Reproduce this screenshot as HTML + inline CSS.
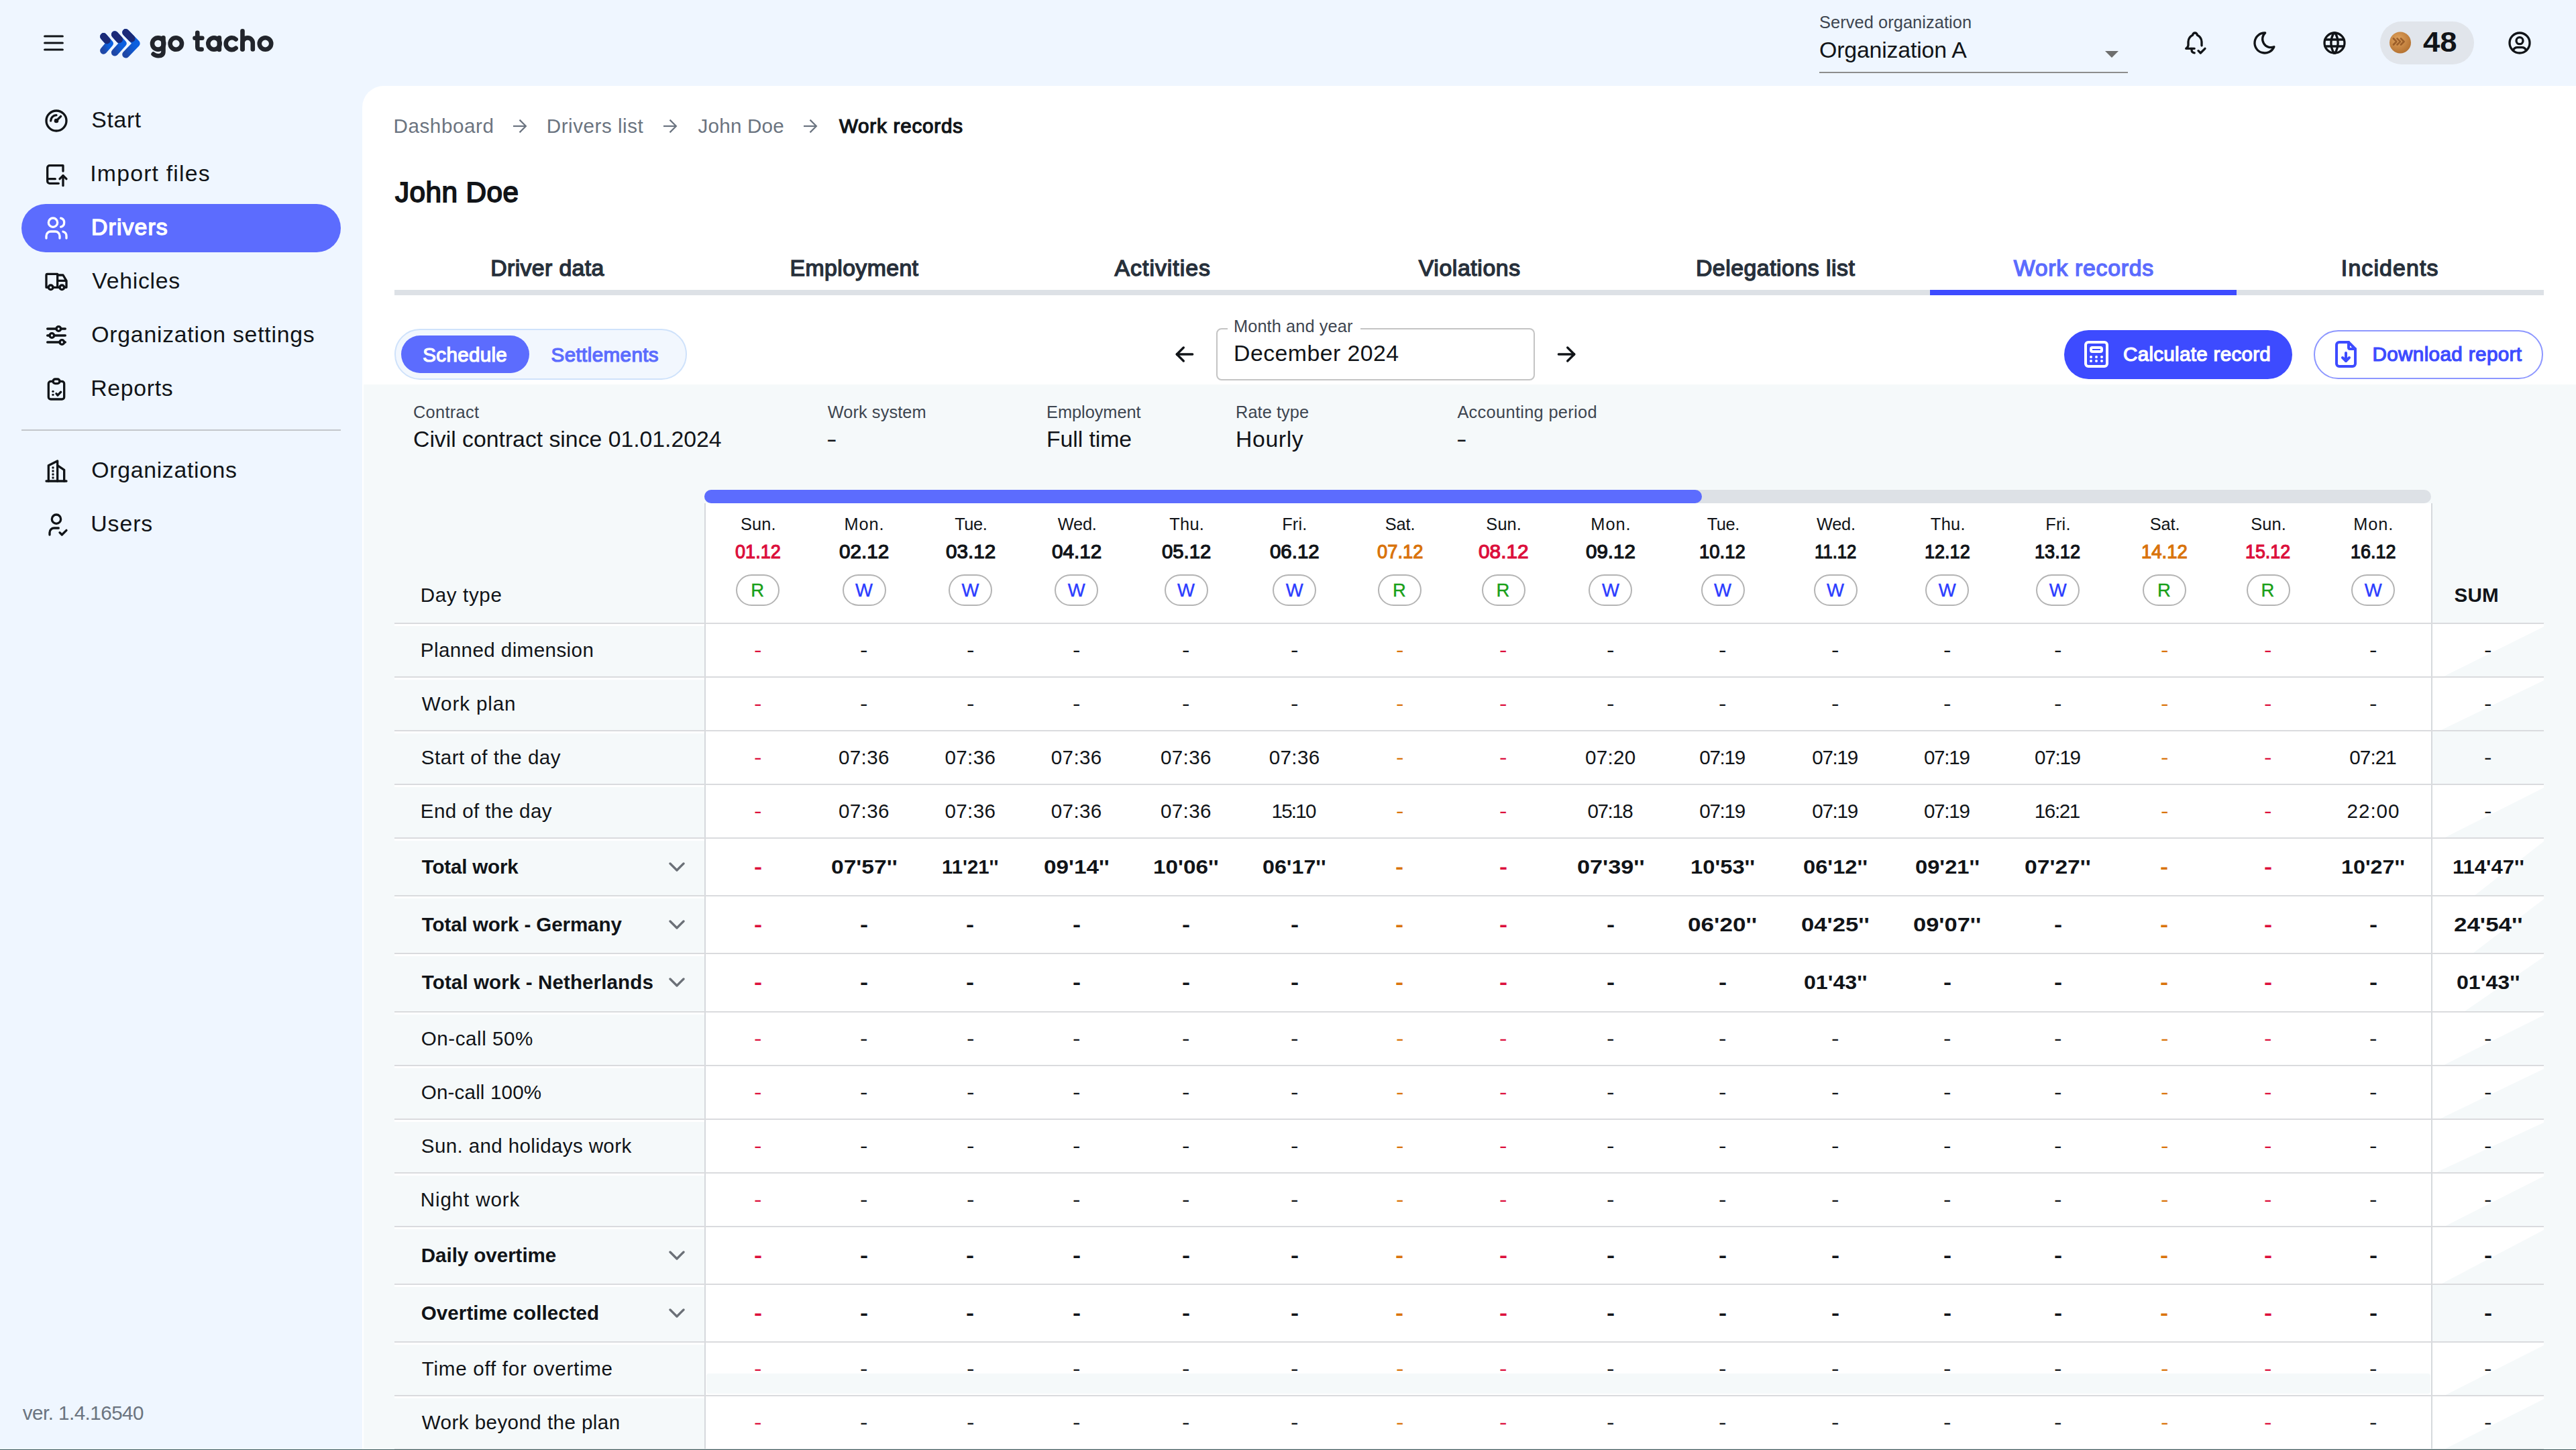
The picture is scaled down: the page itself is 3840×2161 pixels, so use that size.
<!DOCTYPE html><html><head><meta charset="utf-8"><title>Work records</title><style>
html,body{margin:0;padding:0;}
body{width:3840px;height:2161px;overflow:hidden;position:relative;background:#eff6ff;font-family:"Liberation Sans", sans-serif;}
.t{position:absolute;white-space:nowrap;}
.r{position:absolute;box-sizing:border-box;}
.ic{position:absolute;overflow:visible;}
</style></head><body>
<svg class="ic" style="left:60px;top:44px;width:40px;height:40px;" viewBox="0 0 24 24" fill="none" stroke="#111418" stroke-width="1.9" stroke-linecap="round" stroke-linejoin="round"><path d="M4 6l16 0"/><path d="M4 12l16 0"/><path d="M4 18l16 0"/></svg>
<svg class="ic" style="left:0;top:0;width:260px;height:120px" viewBox="0 0 260 120" fill="none" stroke-linecap="round" stroke-linejoin="round"><defs><linearGradient id="lg" x1="0" y1="1" x2="1" y2="0"><stop offset="0" stop-color="#1f47a6"/><stop offset="0.6" stop-color="#0b5fdd"/><stop offset="1" stop-color="#0a60e2"/></linearGradient></defs><g stroke-width="10.6"><path d="M154.4 54.4L163.5 64.8L154.4 75.4" stroke="url(#lg)"/><path d="M154.4 54.4L159.41 60.12" stroke="#1b2a77"/><path d="M171.2 51.5L183.3 64.8L171.2 78.3" stroke="url(#lg)"/><path d="M171.2 51.5L177.85 58.81" stroke="#1b2a77"/><path d="M187.5 48.4L203.4 64.8L187.5 81.2" stroke="url(#lg)"/><path d="M187.5 48.4L196.25 57.42" stroke="#1b2a77"/></g></svg>
<svg class="ic" style="left:0;top:0;width:420px;height:100px" viewBox="0 0 420 100" fill="none" stroke="#22252c" stroke-width="6.6" stroke-linecap="round" stroke-linejoin="round"><circle cx="235.6" cy="65" r="8.6"/><path d="M243.5 56.3V76.5Q243.5 83.2 236 83.2Q231.5 83.2 228.6 80.6"/><circle cx="262.3" cy="65" r="8.7"/><path d="M294.3 48.7V70Q294.3 73.5 297.8 73.5H300.6"/><path d="M290.5 56.8H301.3"/><circle cx="319" cy="65" r="8.7"/><path d="M326.9 56.4V73.9"/><path d="M351.6 58.6A8.9 8.9 0 1 0 351.6 71.8"/><path d="M361.5 46.3V73.5"/><path d="M361.5 73.5V64A7.65 7.65 0 0 1 376.8 64V73.5"/><circle cx="395.5" cy="65" r="8.75"/></svg>
<div class="t" style="left:2712.00px;top:20.52px;font-size:25.37px;line-height:25.37px;font-weight:400;color:#3d4550;letter-spacing:0.086px;">Served organization</div>
<div class="t" style="left:2712.00px;top:58.37px;font-size:33.82px;line-height:33.82px;font-weight:400;color:#111418;letter-spacing:-0.162px;">Organization A</div>
<svg class="ic" style="left:3136px;top:74px;width:24px;height:14px" viewBox="0 0 24 14"><path d="M2 2H22L12 12Z" fill="#6e6e6e"/></svg>
<div class="r" style="left:2712px;top:107px;width:460px;height:2px;background:#8d8d8d;border-radius:0px;"></div>
<svg class="ic" style="left:3252px;top:44px;width:40px;height:40px;" viewBox="0 0 24 24" fill="none" stroke="#111418" stroke-width="2" stroke-linecap="round" stroke-linejoin="round"><path d="M11.5 17h-7.5a4 4 0 0 0 2 -3v-3a7 7 0 0 1 4 -6a2 2 0 1 1 4 0a7 7 0 0 1 4 6v3c.016 .129 .037 .256 .065 .382"/><path d="M9 17v1a3 3 0 0 0 2.502 2.959"/><path d="M15 19l2 2l4 -4"/></svg>
<svg class="ic" style="left:3356px;top:44px;width:40px;height:40px;" viewBox="0 0 24 24" fill="none" stroke="#111418" stroke-width="2" stroke-linecap="round" stroke-linejoin="round"><path d="M12 3c.132 0 .263 0 .393 0a7.5 7.5 0 0 0 7.92 12.446a9 9 0 1 1 -8.313 -12.454z"/></svg>
<svg class="ic" style="left:3460px;top:44px;width:40px;height:40px;" viewBox="0 0 24 24" fill="none" stroke="#111418" stroke-width="2" stroke-linecap="round" stroke-linejoin="round"><path d="M3 12a9 9 0 1 0 18 0a9 9 0 0 0 -18 0"/><path d="M3.6 9h16.8"/><path d="M3.6 15h16.8"/><path d="M11.5 3a17 17 0 0 0 0 18"/><path d="M12.5 3a17 17 0 0 1 0 18"/></svg>
<div class="r" style="left:3548px;top:32px;width:140px;height:64px;background:#e1e5eb;border-radius:32px;"></div>
<svg class="ic" style="left:3560px;top:46px;width:36px;height:36px" viewBox="0 0 36 36"><defs><radialGradient id="cg" cx="40%" cy="35%" r="70%"><stop offset="0" stop-color="#e0a35e"/><stop offset="1" stop-color="#b3702f"/></radialGradient></defs><circle cx="18" cy="17.5" r="16" fill="url(#cg)"/><g fill="none" stroke="#8a4d1d" stroke-width="2.6" stroke-linecap="round" stroke-linejoin="round" opacity="0.75"><path d="M8 11.5l4.5 4.5l-4.5 4.5"/><path d="M13.5 11.5l4.5 4.5l-4.5 4.5"/><path d="M19 11.5l4.5 4.5l-4.5 4.5"/></g></svg>
<div class="t" style="left:3612.00px;top:41.81px;font-size:42.28px;line-height:42.28px;font-weight:700;color:#111418;transform:scaleX(1.0751);transform-origin:0 0;">48</div>
<svg class="ic" style="left:3736px;top:44px;width:40px;height:40px;" viewBox="0 0 24 24" fill="none" stroke="#111418" stroke-width="2" stroke-linecap="round" stroke-linejoin="round"><path d="M12 12m-9 0a9 9 0 1 0 18 0a9 9 0 1 0 -18 0"/><path d="M12 10m-3 0a3 3 0 1 0 6 0a3 3 0 1 0 -6 0"/><path d="M6.168 18.849a4 4 0 0 1 3.832 -2.849h4a4 4 0 0 1 3.834 2.855"/></svg>
<div class="r" style="left:32px;top:304px;width:476px;height:72px;background:#5c6cfe;border-radius:36px;"></div>
<svg class="ic" style="left:64px;top:160px;width:40px;height:40px;" viewBox="0 0 24 24" fill="none" stroke="#111418" stroke-width="2" stroke-linecap="round" stroke-linejoin="round"><path d="M12 12m-9 0a9 9 0 1 0 18 0a9 9 0 1 0 -18 0"/><path d="M12 12m-1 0a1 1 0 1 0 2 0a1 1 0 1 0 -2 0"/><path d="M13.41 10.59l2.59 -2.59"/><path d="M7 12a5 5 0 0 1 5 -5"/></svg>
<div class="t" style="left:136.30px;top:162.37px;font-size:33.82px;line-height:33.82px;font-weight:400;color:#111418;letter-spacing:0.622px;">Start</div>
<svg class="ic" style="left:64px;top:240px;width:40px;height:40px;" viewBox="0 0 24 24" fill="none" stroke="#111418" stroke-width="2" stroke-linecap="round" stroke-linejoin="round"><path d="M18 9v-5h-12a2 2 0 0 0 -2 2v12a2 2 0 0 0 2 2h8"/><path d="M4 16h7"/><path d="M18 22v-9"/><path d="M15 16l3 -3l3 3"/></svg>
<div class="t" style="left:134.30px;top:242.37px;font-size:33.82px;line-height:33.82px;font-weight:400;color:#111418;letter-spacing:1.178px;">Import files</div>
<svg class="ic" style="left:64px;top:320px;width:40px;height:40px;" viewBox="0 0 24 24" fill="none" stroke="#ffffff" stroke-width="2" stroke-linecap="round" stroke-linejoin="round"><path d="M9 7m-4 0a4 4 0 1 0 8 0a4 4 0 1 0 -8 0"/><path d="M3 21v-2a4 4 0 0 1 4 -4h4a4 4 0 0 1 4 4v2"/><path d="M16 3.13a4 4 0 0 1 0 7.75"/><path d="M21 21v-2a4 4 0 0 0 -3 -3.85"/></svg>
<div class="t" style="left:136.01px;top:322.37px;font-size:33.82px;line-height:33.82px;font-weight:400;color:#ffffff;letter-spacing:1.103px;-webkit-text-stroke:1.42px #ffffff;">Drivers</div>
<svg class="ic" style="left:64px;top:400px;width:40px;height:40px;" viewBox="0 0 24 24" fill="none" stroke="#111418" stroke-width="2" stroke-linecap="round" stroke-linejoin="round"><path d="M7 17m-2 0a2 2 0 1 0 4 0a2 2 0 1 0 -4 0"/><path d="M17 17m-2 0a2 2 0 1 0 4 0a2 2 0 1 0 -4 0"/><path d="M5 17h-2v-11a1 1 0 0 1 1 -1h9v12m-4 0h6m4 0h2v-6h-8m0 -5h5l3 5"/></svg>
<div class="t" style="left:137.30px;top:401.87px;font-size:33.82px;line-height:33.82px;font-weight:400;color:#111418;letter-spacing:0.710px;">Vehicles</div>
<svg class="ic" style="left:64px;top:480px;width:40px;height:40px;" viewBox="0 0 24 24" fill="none" stroke="#111418" stroke-width="2" stroke-linecap="round" stroke-linejoin="round"><path d="M14 6m-2 0a2 2 0 1 0 4 0a2 2 0 1 0 -4 0"/><path d="M4 6l8 0"/><path d="M16 6l4 0"/><path d="M8 12m-2 0a2 2 0 1 0 4 0a2 2 0 1 0 -4 0"/><path d="M4 12l2 0"/><path d="M10 12l10 0"/><path d="M17 18m-2 0a2 2 0 1 0 4 0a2 2 0 1 0 -4 0"/><path d="M4 18l11 0"/><path d="M19 18l1 0"/></svg>
<div class="t" style="left:136.30px;top:481.87px;font-size:33.82px;line-height:33.82px;font-weight:400;color:#111418;letter-spacing:0.734px;">Organization settings</div>
<svg class="ic" style="left:64px;top:560px;width:40px;height:40px;" viewBox="0 0 24 24" fill="none" stroke="#111418" stroke-width="2" stroke-linecap="round" stroke-linejoin="round"><path d="M9 5h-2a2 2 0 0 0 -2 2v12a2 2 0 0 0 2 2h10a2 2 0 0 0 2 -2v-12a2 2 0 0 0 -2 -2h-2"/><path d="M9 3m0 2a2 2 0 0 1 2 -2h2a2 2 0 0 1 2 2v0a2 2 0 0 1 -2 2h-2a2 2 0 0 1 -2 -2z"/><path d="M9 14v.01"/><path d="M9 17v.01"/><path d="M12 16l1.2 1.5l2.8 -3"/></svg>
<div class="t" style="left:135.30px;top:561.87px;font-size:33.82px;line-height:33.82px;font-weight:400;color:#111418;letter-spacing:0.652px;">Reports</div>
<svg class="ic" style="left:64px;top:682px;width:40px;height:40px;" viewBox="0 0 24 24" fill="none" stroke="#111418" stroke-width="2" stroke-linecap="round" stroke-linejoin="round"><path d="M3 21l18 0"/><path d="M5 21v-14l8 -4v18"/><path d="M19 21v-10l-6 -4"/><path d="M9 9l0 .01"/><path d="M9 12l0 .01"/><path d="M9 15l0 .01"/><path d="M9 18l0 .01"/></svg>
<div class="t" style="left:136.30px;top:683.87px;font-size:33.82px;line-height:33.82px;font-weight:400;color:#111418;letter-spacing:0.674px;">Organizations</div>
<svg class="ic" style="left:64px;top:762px;width:40px;height:40px;" viewBox="0 0 24 24" fill="none" stroke="#111418" stroke-width="2" stroke-linecap="round" stroke-linejoin="round"><path d="M8 7a4 4 0 1 0 8 0a4 4 0 0 0 -8 0"/><path d="M6 21v-2a4 4 0 0 1 4 -4h4"/><path d="M15 19l2 2l4 -4"/></svg>
<div class="t" style="left:135.30px;top:763.87px;font-size:33.82px;line-height:33.82px;font-weight:400;color:#111418;letter-spacing:0.903px;">Users</div>
<div class="r" style="left:32px;top:640px;width:476px;height:2px;background:#c3c6cb;border-radius:0px;"></div>
<div class="t" style="left:33.80px;top:2090.64px;font-size:29.6px;line-height:29.6px;font-weight:400;color:#6b7480;letter-spacing:-0.532px;">ver. 1.4.16540</div>
<div class="r" style="left:540px;top:128px;width:3300px;height:2033px;background:#ffffff;border-radius:0px;border-top-left-radius:32px;"></div>
<div class="t" style="left:586.50px;top:173.14px;font-size:29.6px;line-height:29.6px;font-weight:400;color:#6b7480;letter-spacing:0.573px;">Dashboard</div>
<div class="t" style="left:814.80px;top:173.14px;font-size:29.6px;line-height:29.6px;font-weight:400;color:#6b7480;letter-spacing:0.529px;">Drivers list</div>
<div class="t" style="left:1040.50px;top:173.14px;font-size:29.6px;line-height:29.6px;font-weight:400;color:#6b7480;letter-spacing:0.225px;">John Doe</div>
<div class="t" style="left:1250.92px;top:173.14px;font-size:29.6px;line-height:29.6px;font-weight:400;color:#111418;letter-spacing:0.786px;-webkit-text-stroke:1.24px #111418;">Work records</div>
<svg class="ic" style="left:763px;top:176px;width:26px;height:24px" viewBox="0 0 26 24" fill="none" stroke="#6b7480" stroke-width="2.2" stroke-linecap="butt" stroke-linejoin="miter"><path d="M2 12H21"/><path d="M11.5 2.6L20.9 12L11.5 21.4"/></svg>
<svg class="ic" style="left:987px;top:176px;width:26px;height:24px" viewBox="0 0 26 24" fill="none" stroke="#6b7480" stroke-width="2.2" stroke-linecap="butt" stroke-linejoin="miter"><path d="M2 12H21"/><path d="M11.5 2.6L20.9 12L11.5 21.4"/></svg>
<svg class="ic" style="left:1196.4px;top:176px;width:26px;height:24px" viewBox="0 0 26 24" fill="none" stroke="#6b7480" stroke-width="2.2" stroke-linecap="butt" stroke-linejoin="miter"><path d="M2 12H21"/><path d="M11.5 2.6L20.9 12L11.5 21.4"/></svg>
<div class="t" style="left:588.89px;top:266.21px;font-size:42.28px;line-height:42.28px;font-weight:400;color:#111418;letter-spacing:0.471px;-webkit-text-stroke:1.78px #111418;">John Doe</div>
<div class="r" style="left:588px;top:432px;width:3204px;height:8px;background:#dde1e6;border-radius:0px;"></div>
<div class="r" style="left:2877px;top:432px;width:457px;height:8px;background:#3d4bff;border-radius:0px;"></div>
<div class="t" style="left:731.22px;top:383.17px;font-size:33.82px;line-height:33.82px;font-weight:400;color:#27303b;letter-spacing:0.372px;-webkit-text-stroke:1.42px #27303b;">Driver data</div>
<div class="t" style="left:1177.53px;top:383.17px;font-size:33.82px;line-height:33.82px;font-weight:400;color:#27303b;letter-spacing:0.395px;-webkit-text-stroke:1.42px #27303b;">Employment</div>
<div class="t" style="left:1661.50px;top:383.17px;font-size:33.82px;line-height:33.82px;font-weight:400;color:#27303b;letter-spacing:1.009px;-webkit-text-stroke:1.42px #27303b;">Activities</div>
<div class="t" style="left:2114.71px;top:383.17px;font-size:33.82px;line-height:33.82px;font-weight:400;color:#27303b;letter-spacing:0.610px;-webkit-text-stroke:1.42px #27303b;">Violations</div>
<div class="t" style="left:2527.92px;top:383.17px;font-size:33.82px;line-height:33.82px;font-weight:400;color:#27303b;letter-spacing:0.512px;-webkit-text-stroke:1.42px #27303b;">Delegations list</div>
<div class="t" style="left:3001.64px;top:383.17px;font-size:33.82px;line-height:33.82px;font-weight:400;color:#5c6cfe;letter-spacing:0.734px;-webkit-text-stroke:1.42px #5c6cfe;">Work records</div>
<div class="t" style="left:3489.85px;top:383.17px;font-size:33.82px;line-height:33.82px;font-weight:400;color:#27303b;letter-spacing:1.144px;-webkit-text-stroke:1.42px #27303b;">Incidents</div>
<div class="r" style="left:588px;top:490px;width:436px;height:76px;background:#f2f7fe;border-radius:38px;border:2px solid #cfe2fb;"></div>
<div class="r" style="left:598px;top:500px;width:191px;height:56px;background:#5c6cfe;border-radius:28px;"></div>
<div class="t" style="left:630.32px;top:513.54px;font-size:29.6px;line-height:29.6px;font-weight:400;color:#ffffff;letter-spacing:0.302px;-webkit-text-stroke:1.24px #ffffff;">Schedule</div>
<div class="t" style="left:821.52px;top:513.54px;font-size:29.6px;line-height:29.6px;font-weight:400;color:#5c6cfe;letter-spacing:0.389px;-webkit-text-stroke:1.24px #5c6cfe;">Settlements</div>
<svg class="ic" style="left:1746px;top:508px;width:40px;height:40px;" viewBox="0 0 24 24" fill="none" stroke="#111418" stroke-width="2" stroke-linecap="round" stroke-linejoin="round"><path d="M5 12l14 0"/><path d="M5 12l6 6"/><path d="M5 12l6 -6"/></svg>
<svg class="ic" style="left:2315px;top:508px;width:40px;height:40px;" viewBox="0 0 24 24" fill="none" stroke="#111418" stroke-width="2" stroke-linecap="round" stroke-linejoin="round"><path d="M5 12l14 0"/><path d="M13 18l6 -6"/><path d="M13 6l6 6"/></svg>
<div class="r" style="left:1813px;top:489px;width:475px;height:78px;background:#ffffff;border-radius:8px;border:2px solid #c4c4c4;"></div>
<div class="r" style="left:1830px;top:484px;width:198px;height:10px;background:#ffffff;border-radius:0px;"></div>
<div class="t" style="left:1839.00px;top:474.12px;font-size:25.37px;line-height:25.37px;font-weight:400;color:#3d4550;letter-spacing:0.095px;">Month and year</div>
<div class="t" style="left:1839.00px;top:510.07px;font-size:33.82px;line-height:33.82px;font-weight:400;color:#111418;letter-spacing:0.460px;">December 2024</div>
<div class="r" style="left:3077px;top:492px;width:340px;height:73px;background:#3d4bff;border-radius:37px;"></div>
<svg class="ic" style="left:3101px;top:504px;width:48px;height:48px;" viewBox="0 0 24 24" fill="none" stroke="#ffffff" stroke-width="2" stroke-linecap="round" stroke-linejoin="round"><path d="M4 3m0 2a2 2 0 0 1 2 -2h12a2 2 0 0 1 2 2v14a2 2 0 0 1 -2 2h-12a2 2 0 0 1 -2 -2z"/><path d="M8 7m0 1a1 1 0 0 1 1 -1h6a1 1 0 0 1 1 1v1a1 1 0 0 1 -1 1h-6a1 1 0 0 1 -1 -1z"/><path d="M8 14l0 .01"/><path d="M12 14l0 .01"/><path d="M16 14l0 .01"/><path d="M8 17l0 .01"/><path d="M12 17l0 .01"/><path d="M16 17l0 .01"/></svg>
<div class="t" style="left:3165.02px;top:512.94px;font-size:29.6px;line-height:29.6px;font-weight:400;color:#ffffff;letter-spacing:0.289px;-webkit-text-stroke:1.24px #ffffff;">Calculate record</div>
<div class="r" style="left:3449px;top:492px;width:342px;height:73px;background:#ffffff;border-radius:37px;border:2px solid #8d97ff;"></div>
<svg class="ic" style="left:3473px;top:504px;width:48px;height:48px;" viewBox="0 0 24 24" fill="none" stroke="#3d4bff" stroke-width="2" stroke-linecap="round" stroke-linejoin="round"><path d="M14 3v4a1 1 0 0 0 1 1h4"/><path d="M17 21h-10a2 2 0 0 1 -2 -2v-14a2 2 0 0 1 2 -2h7l5 5v11a2 2 0 0 1 -2 2z"/><path d="M12 17v-6"/><path d="M9.5 14.5l2.5 2.5l2.5 -2.5"/></svg>
<div class="t" style="left:3536.42px;top:512.94px;font-size:29.6px;line-height:29.6px;font-weight:400;color:#3d4bff;letter-spacing:0.396px;-webkit-text-stroke:1.24px #3d4bff;">Download report</div>
<div class="r" style="left:542px;top:573px;width:3298px;height:1588px;background:#f5f9fa;border-radius:0px;"></div>
<div class="t" style="left:616.00px;top:602.22px;font-size:25.37px;line-height:25.37px;font-weight:400;color:#3d4550;letter-spacing:0.301px;">Contract</div>
<div class="t" style="left:616.00px;top:638.37px;font-size:33.82px;line-height:33.82px;font-weight:400;color:#111418;letter-spacing:-0.029px;">Civil contract since 01.01.2024</div>
<div class="t" style="left:1233.70px;top:602.22px;font-size:25.37px;line-height:25.37px;font-weight:400;color:#3d4550;letter-spacing:0.086px;">Work system</div>
<div class="t" style="left:1232.31px;top:638.37px;font-size:33.82px;line-height:33.82px;font-weight:400;color:#111418;transform:scaleX(1.3889);transform-origin:0 0;">-</div>
<div class="t" style="left:1560.00px;top:602.22px;font-size:25.37px;line-height:25.37px;font-weight:400;color:#3d4550;letter-spacing:-0.032px;">Employment</div>
<div class="t" style="left:1560.00px;top:638.37px;font-size:33.82px;line-height:33.82px;font-weight:400;color:#111418;letter-spacing:-0.094px;">Full time</div>
<div class="t" style="left:1842.00px;top:602.22px;font-size:25.37px;line-height:25.37px;font-weight:400;color:#3d4550;letter-spacing:0.070px;">Rate type</div>
<div class="t" style="left:1842.00px;top:638.37px;font-size:33.82px;line-height:33.82px;font-weight:400;color:#111418;letter-spacing:0.600px;">Hourly</div>
<div class="t" style="left:2172.40px;top:602.22px;font-size:25.37px;line-height:25.37px;font-weight:400;color:#3d4550;letter-spacing:0.318px;">Accounting period</div>
<div class="t" style="left:2171.01px;top:638.37px;font-size:33.82px;line-height:33.82px;font-weight:400;color:#111418;transform:scaleX(1.3889);transform-origin:0 0;">-</div>
<div class="r" style="left:1050px;top:730px;width:2574px;height:20px;background:#dde1e6;border-radius:10px;"></div>
<div class="r" style="left:1050px;top:730px;width:1487px;height:20px;background:#5c6cfe;border-radius:10px;"></div>
<div class="r" style="left:1051px;top:750px;width:2574px;height:1411px;background:#ffffff;border-radius:0px;"></div>
<div class="r" style="left:1050px;top:750px;width:2px;height:1411px;background:#d6d9dd;border-radius:0px;"></div>
<div class="r" style="left:3624px;top:750px;width:2px;height:1411px;background:#d6d9dd;border-radius:0px;"></div>
<div class="t" style="left:1104.05px;top:768.72px;font-size:25.37px;line-height:25.37px;font-weight:400;color:#111418;letter-spacing:0.126px;">Sun.</div>
<div class="t" style="left:1096.05px;top:807.34px;font-size:29.6px;line-height:29.6px;font-weight:400;color:#dc0f3c;transform:scaleX(0.9157);transform-origin:0 0;-webkit-text-stroke:1.24px #dc0f3c;">01.12</div>
<div class="r" style="left:1097.3px;top:855.8px;width:65px;height:47px;background:transparent;border-radius:24px;border:2px solid #b4b4b4;"></div>
<div class="t" style="left:1119.30px;top:866.34px;font-size:27.48px;line-height:27.48px;font-weight:400;color:#19a019;letter-spacing:0.824px;-webkit-text-stroke:0.4px #19a019;">R</div>
<div class="t" style="left:1258.45px;top:768.72px;font-size:25.37px;line-height:25.37px;font-weight:400;color:#111418;letter-spacing:0.923px;">Mon.</div>
<div class="t" style="left:1251.12px;top:807.34px;font-size:29.6px;line-height:29.6px;font-weight:400;color:#111418;transform:scaleX(1.0023);transform-origin:0 0;-webkit-text-stroke:1.24px #111418;">02.12</div>
<div class="r" style="left:1255.5px;top:855.8px;width:65px;height:47px;background:transparent;border-radius:24px;border:2px solid #b4b4b4;"></div>
<div class="t" style="left:1275.00px;top:866.34px;font-size:27.48px;line-height:27.48px;font-weight:400;color:#2b3cff;letter-spacing:0.824px;-webkit-text-stroke:0.4px #2b3cff;">W</div>
<div class="t" style="left:1423.20px;top:768.72px;font-size:25.37px;line-height:25.37px;font-weight:400;color:#111418;letter-spacing:-0.385px;">Tue.</div>
<div class="t" style="left:1409.62px;top:807.34px;font-size:29.6px;line-height:29.6px;font-weight:400;color:#111418;transform:scaleX(1.0023);transform-origin:0 0;-webkit-text-stroke:1.24px #111418;">03.12</div>
<div class="r" style="left:1414.0px;top:855.8px;width:65px;height:47px;background:transparent;border-radius:24px;border:2px solid #b4b4b4;"></div>
<div class="t" style="left:1433.50px;top:866.34px;font-size:27.48px;line-height:27.48px;font-weight:400;color:#2b3cff;letter-spacing:0.824px;-webkit-text-stroke:0.4px #2b3cff;">W</div>
<div class="t" style="left:1576.85px;top:768.72px;font-size:25.37px;line-height:25.37px;font-weight:400;color:#111418;letter-spacing:-0.261px;">Wed.</div>
<div class="t" style="left:1567.92px;top:807.34px;font-size:29.6px;line-height:29.6px;font-weight:400;color:#111418;transform:scaleX(1.0023);transform-origin:0 0;-webkit-text-stroke:1.24px #111418;">04.12</div>
<div class="r" style="left:1572.3px;top:855.8px;width:65px;height:47px;background:transparent;border-radius:24px;border:2px solid #b4b4b4;"></div>
<div class="t" style="left:1591.80px;top:866.34px;font-size:27.48px;line-height:27.48px;font-weight:400;color:#2b3cff;letter-spacing:0.824px;-webkit-text-stroke:0.4px #2b3cff;">W</div>
<div class="t" style="left:1743.15px;top:768.72px;font-size:25.37px;line-height:25.37px;font-weight:400;color:#111418;letter-spacing:0.334px;">Thu.</div>
<div class="t" style="left:1731.62px;top:807.34px;font-size:29.6px;line-height:29.6px;font-weight:400;color:#111418;transform:scaleX(0.9883);transform-origin:0 0;-webkit-text-stroke:1.24px #111418;">05.12</div>
<div class="r" style="left:1735.5px;top:855.8px;width:65px;height:47px;background:transparent;border-radius:24px;border:2px solid #b4b4b4;"></div>
<div class="t" style="left:1755.00px;top:866.34px;font-size:27.48px;line-height:27.48px;font-weight:400;color:#2b3cff;letter-spacing:0.824px;-webkit-text-stroke:0.4px #2b3cff;">W</div>
<div class="t" style="left:1911.15px;top:768.72px;font-size:25.37px;line-height:25.37px;font-weight:400;color:#111418;letter-spacing:0.210px;">Fri.</div>
<div class="t" style="left:1893.17px;top:807.34px;font-size:29.6px;line-height:29.6px;font-weight:400;color:#111418;transform:scaleX(0.9939);transform-origin:0 0;-webkit-text-stroke:1.24px #111418;">06.12</div>
<div class="r" style="left:1897.25px;top:855.8px;width:65px;height:47px;background:transparent;border-radius:24px;border:2px solid #b4b4b4;"></div>
<div class="t" style="left:1916.75px;top:866.34px;font-size:27.48px;line-height:27.48px;font-weight:400;color:#2b3cff;letter-spacing:0.824px;-webkit-text-stroke:0.4px #2b3cff;">W</div>
<div class="t" style="left:2064.65px;top:768.72px;font-size:25.37px;line-height:25.37px;font-weight:400;color:#111418;letter-spacing:-0.055px;">Sat.</div>
<div class="t" style="left:2052.55px;top:807.34px;font-size:29.6px;line-height:29.6px;font-weight:400;color:#d9730b;transform:scaleX(0.9240);transform-origin:0 0;-webkit-text-stroke:1.24px #d9730b;">07.12</div>
<div class="r" style="left:2054.1px;top:855.8px;width:65px;height:47px;background:transparent;border-radius:24px;border:2px solid #b4b4b4;"></div>
<div class="t" style="left:2076.10px;top:866.34px;font-size:27.48px;line-height:27.48px;font-weight:400;color:#19a019;letter-spacing:0.824px;-webkit-text-stroke:0.4px #19a019;">R</div>
<div class="t" style="left:2215.35px;top:768.72px;font-size:25.37px;line-height:25.37px;font-weight:400;color:#111418;letter-spacing:0.126px;">Sun.</div>
<div class="t" style="left:2204.07px;top:807.34px;font-size:29.6px;line-height:29.6px;font-weight:400;color:#dc0f3c;transform:scaleX(1.0065);transform-origin:0 0;-webkit-text-stroke:1.24px #dc0f3c;">08.12</div>
<div class="r" style="left:2208.6px;top:855.8px;width:65px;height:47px;background:transparent;border-radius:24px;border:2px solid #b4b4b4;"></div>
<div class="t" style="left:2230.60px;top:866.34px;font-size:27.48px;line-height:27.48px;font-weight:400;color:#19a019;letter-spacing:0.824px;-webkit-text-stroke:0.4px #19a019;">R</div>
<div class="t" style="left:2371.35px;top:768.72px;font-size:25.37px;line-height:25.37px;font-weight:400;color:#111418;letter-spacing:0.923px;">Mon.</div>
<div class="t" style="left:2364.17px;top:807.34px;font-size:29.6px;line-height:29.6px;font-weight:400;color:#111418;transform:scaleX(0.9981);transform-origin:0 0;-webkit-text-stroke:1.24px #111418;">09.12</div>
<div class="r" style="left:2368.4px;top:855.8px;width:65px;height:47px;background:transparent;border-radius:24px;border:2px solid #b4b4b4;"></div>
<div class="t" style="left:2387.90px;top:866.34px;font-size:27.48px;line-height:27.48px;font-weight:400;color:#2b3cff;letter-spacing:0.824px;-webkit-text-stroke:0.4px #2b3cff;">W</div>
<div class="t" style="left:2544.70px;top:768.72px;font-size:25.37px;line-height:25.37px;font-weight:400;color:#111418;letter-spacing:-0.385px;">Tue.</div>
<div class="t" style="left:2533.32px;top:807.34px;font-size:29.6px;line-height:29.6px;font-weight:400;color:#111418;transform:scaleX(0.9286);transform-origin:0 0;-webkit-text-stroke:1.24px #111418;">10.12</div>
<div class="r" style="left:2535.5px;top:855.8px;width:65px;height:47px;background:transparent;border-radius:24px;border:2px solid #b4b4b4;"></div>
<div class="t" style="left:2555.00px;top:866.34px;font-size:27.48px;line-height:27.48px;font-weight:400;color:#2b3cff;letter-spacing:0.824px;-webkit-text-stroke:0.4px #2b3cff;">W</div>
<div class="t" style="left:2708.05px;top:768.72px;font-size:25.37px;line-height:25.37px;font-weight:400;color:#111418;letter-spacing:-0.261px;">Wed.</div>
<div class="t" style="left:2704.50px;top:807.34px;font-size:29.6px;line-height:29.6px;font-weight:400;color:#111418;transform:scaleX(0.8678);transform-origin:0 0;-webkit-text-stroke:1.24px #111418;">11.12</div>
<div class="r" style="left:2703.5px;top:855.8px;width:65px;height:47px;background:transparent;border-radius:24px;border:2px solid #b4b4b4;"></div>
<div class="t" style="left:2723.00px;top:866.34px;font-size:27.48px;line-height:27.48px;font-weight:400;color:#2b3cff;letter-spacing:0.824px;-webkit-text-stroke:0.4px #2b3cff;">W</div>
<div class="t" style="left:2877.85px;top:768.72px;font-size:25.37px;line-height:25.37px;font-weight:400;color:#111418;letter-spacing:0.334px;">Thu.</div>
<div class="t" style="left:2868.54px;top:807.34px;font-size:29.6px;line-height:29.6px;font-weight:400;color:#111418;transform:scaleX(0.9145);transform-origin:0 0;-webkit-text-stroke:1.24px #111418;">12.12</div>
<div class="r" style="left:2870.2px;top:855.8px;width:65px;height:47px;background:transparent;border-radius:24px;border:2px solid #b4b4b4;"></div>
<div class="t" style="left:2889.70px;top:866.34px;font-size:27.48px;line-height:27.48px;font-weight:400;color:#2b3cff;letter-spacing:0.824px;-webkit-text-stroke:0.4px #2b3cff;">W</div>
<div class="t" style="left:3049.20px;top:768.72px;font-size:25.37px;line-height:25.37px;font-weight:400;color:#111418;letter-spacing:0.210px;">Fri.</div>
<div class="t" style="left:3033.48px;top:807.34px;font-size:29.6px;line-height:29.6px;font-weight:400;color:#111418;transform:scaleX(0.9187);transform-origin:0 0;-webkit-text-stroke:1.24px #111418;">13.12</div>
<div class="r" style="left:3035.3px;top:855.8px;width:65px;height:47px;background:transparent;border-radius:24px;border:2px solid #b4b4b4;"></div>
<div class="t" style="left:3054.80px;top:866.34px;font-size:27.48px;line-height:27.48px;font-weight:400;color:#2b3cff;letter-spacing:0.824px;-webkit-text-stroke:0.4px #2b3cff;">W</div>
<div class="t" style="left:3204.65px;top:768.72px;font-size:25.37px;line-height:25.37px;font-weight:400;color:#111418;letter-spacing:-0.055px;">Sat.</div>
<div class="t" style="left:3191.92px;top:807.34px;font-size:29.6px;line-height:29.6px;font-weight:400;color:#d9730b;transform:scaleX(0.9286);transform-origin:0 0;-webkit-text-stroke:1.24px #d9730b;">14.12</div>
<div class="r" style="left:3194.1px;top:855.8px;width:65px;height:47px;background:transparent;border-radius:24px;border:2px solid #b4b4b4;"></div>
<div class="t" style="left:3216.10px;top:866.34px;font-size:27.48px;line-height:27.48px;font-weight:400;color:#19a019;letter-spacing:0.824px;-webkit-text-stroke:0.4px #19a019;">R</div>
<div class="t" style="left:3355.25px;top:768.72px;font-size:25.37px;line-height:25.37px;font-weight:400;color:#111418;letter-spacing:0.126px;">Sun.</div>
<div class="t" style="left:3347.15px;top:807.34px;font-size:29.6px;line-height:29.6px;font-weight:400;color:#dc0f3c;transform:scaleX(0.9060);transform-origin:0 0;-webkit-text-stroke:1.24px #dc0f3c;">15.12</div>
<div class="r" style="left:3348.5px;top:855.8px;width:65px;height:47px;background:transparent;border-radius:24px;border:2px solid #b4b4b4;"></div>
<div class="t" style="left:3370.50px;top:866.34px;font-size:27.48px;line-height:27.48px;font-weight:400;color:#19a019;letter-spacing:0.824px;-webkit-text-stroke:0.4px #19a019;">R</div>
<div class="t" style="left:3508.25px;top:768.72px;font-size:25.37px;line-height:25.37px;font-weight:400;color:#111418;letter-spacing:0.923px;">Mon.</div>
<div class="t" style="left:3503.79px;top:807.34px;font-size:29.6px;line-height:29.6px;font-weight:400;color:#111418;transform:scaleX(0.9102);transform-origin:0 0;-webkit-text-stroke:1.24px #111418;">16.12</div>
<div class="r" style="left:3505.3px;top:855.8px;width:65px;height:47px;background:transparent;border-radius:24px;border:2px solid #b4b4b4;"></div>
<div class="t" style="left:3524.80px;top:866.34px;font-size:27.48px;line-height:27.48px;font-weight:400;color:#2b3cff;letter-spacing:0.824px;-webkit-text-stroke:0.4px #2b3cff;">W</div>
<div class="t" style="left:626.80px;top:872.14px;font-size:29.6px;line-height:29.6px;font-weight:400;color:#111418;letter-spacing:0.610px;">Day type</div>
<div class="t" style="left:3658.60px;top:871.94px;font-size:29.6px;line-height:29.6px;font-weight:700;color:#111418;letter-spacing:0.095px;">SUM</div>
<div class="r" style="left:1053px;top:2047px;width:2570px;height:30px;background:#f5f9fa;border-radius:4px;"></div>
<svg class="ic" style="left:3626px;top:929.0px;width:166px;height:80.0px" viewBox="0 0 166 80.0" preserveAspectRatio="none"><polygon points="0,0 166,0 166,5 15.0,80.0 0,80.0" fill="#ffffff"/></svg>
<div class="t" style="left:626.80px;top:953.94px;font-size:29.6px;line-height:29.6px;font-weight:400;color:#111418;letter-spacing:0.396px;">Planned dimension</div>
<div class="t" style="left:1123.99px;top:953.94px;font-size:29.6px;line-height:29.6px;font-weight:400;color:#dc0f3c;transform:scaleX(1.1625);transform-origin:0 0;">-</div>
<div class="t" style="left:1282.19px;top:953.94px;font-size:29.6px;line-height:29.6px;font-weight:400;color:#111418;transform:scaleX(1.1625);transform-origin:0 0;">-</div>
<div class="t" style="left:1440.69px;top:953.94px;font-size:29.6px;line-height:29.6px;font-weight:400;color:#111418;transform:scaleX(1.1625);transform-origin:0 0;">-</div>
<div class="t" style="left:1598.99px;top:953.94px;font-size:29.6px;line-height:29.6px;font-weight:400;color:#111418;transform:scaleX(1.1625);transform-origin:0 0;">-</div>
<div class="t" style="left:1762.19px;top:953.94px;font-size:29.6px;line-height:29.6px;font-weight:400;color:#111418;transform:scaleX(1.1625);transform-origin:0 0;">-</div>
<div class="t" style="left:1923.94px;top:953.94px;font-size:29.6px;line-height:29.6px;font-weight:400;color:#111418;transform:scaleX(1.1625);transform-origin:0 0;">-</div>
<div class="t" style="left:2080.79px;top:953.94px;font-size:29.6px;line-height:29.6px;font-weight:400;color:#d9730b;transform:scaleX(1.1625);transform-origin:0 0;">-</div>
<div class="t" style="left:2235.29px;top:953.94px;font-size:29.6px;line-height:29.6px;font-weight:400;color:#dc0f3c;transform:scaleX(1.1625);transform-origin:0 0;">-</div>
<div class="t" style="left:2395.09px;top:953.94px;font-size:29.6px;line-height:29.6px;font-weight:400;color:#111418;transform:scaleX(1.1625);transform-origin:0 0;">-</div>
<div class="t" style="left:2562.19px;top:953.94px;font-size:29.6px;line-height:29.6px;font-weight:400;color:#111418;transform:scaleX(1.1625);transform-origin:0 0;">-</div>
<div class="t" style="left:2730.19px;top:953.94px;font-size:29.6px;line-height:29.6px;font-weight:400;color:#111418;transform:scaleX(1.1625);transform-origin:0 0;">-</div>
<div class="t" style="left:2896.89px;top:953.94px;font-size:29.6px;line-height:29.6px;font-weight:400;color:#111418;transform:scaleX(1.1625);transform-origin:0 0;">-</div>
<div class="t" style="left:3061.99px;top:953.94px;font-size:29.6px;line-height:29.6px;font-weight:400;color:#111418;transform:scaleX(1.1625);transform-origin:0 0;">-</div>
<div class="t" style="left:3220.79px;top:953.94px;font-size:29.6px;line-height:29.6px;font-weight:400;color:#d9730b;transform:scaleX(1.1625);transform-origin:0 0;">-</div>
<div class="t" style="left:3375.19px;top:953.94px;font-size:29.6px;line-height:29.6px;font-weight:400;color:#dc0f3c;transform:scaleX(1.1625);transform-origin:0 0;">-</div>
<div class="t" style="left:3531.99px;top:953.94px;font-size:29.6px;line-height:29.6px;font-weight:400;color:#111418;transform:scaleX(1.1625);transform-origin:0 0;">-</div>
<div class="t" style="left:3703.19px;top:953.94px;font-size:29.6px;line-height:29.6px;font-weight:400;color:#111418;transform:scaleX(1.1625);transform-origin:0 0;">-</div>
<svg class="ic" style="left:3626px;top:1009.0px;width:166px;height:80.0px" viewBox="0 0 166 80.0" preserveAspectRatio="none"><polygon points="0,0 166,0 166,5 11.0,80.0 0,80.0" fill="#ffffff"/></svg>
<div class="t" style="left:628.80px;top:1033.94px;font-size:29.6px;line-height:29.6px;font-weight:400;color:#111418;letter-spacing:0.888px;">Work plan</div>
<div class="t" style="left:1123.99px;top:1033.94px;font-size:29.6px;line-height:29.6px;font-weight:400;color:#dc0f3c;transform:scaleX(1.1625);transform-origin:0 0;">-</div>
<div class="t" style="left:1282.19px;top:1033.94px;font-size:29.6px;line-height:29.6px;font-weight:400;color:#111418;transform:scaleX(1.1625);transform-origin:0 0;">-</div>
<div class="t" style="left:1440.69px;top:1033.94px;font-size:29.6px;line-height:29.6px;font-weight:400;color:#111418;transform:scaleX(1.1625);transform-origin:0 0;">-</div>
<div class="t" style="left:1598.99px;top:1033.94px;font-size:29.6px;line-height:29.6px;font-weight:400;color:#111418;transform:scaleX(1.1625);transform-origin:0 0;">-</div>
<div class="t" style="left:1762.19px;top:1033.94px;font-size:29.6px;line-height:29.6px;font-weight:400;color:#111418;transform:scaleX(1.1625);transform-origin:0 0;">-</div>
<div class="t" style="left:1923.94px;top:1033.94px;font-size:29.6px;line-height:29.6px;font-weight:400;color:#111418;transform:scaleX(1.1625);transform-origin:0 0;">-</div>
<div class="t" style="left:2080.79px;top:1033.94px;font-size:29.6px;line-height:29.6px;font-weight:400;color:#d9730b;transform:scaleX(1.1625);transform-origin:0 0;">-</div>
<div class="t" style="left:2235.29px;top:1033.94px;font-size:29.6px;line-height:29.6px;font-weight:400;color:#dc0f3c;transform:scaleX(1.1625);transform-origin:0 0;">-</div>
<div class="t" style="left:2395.09px;top:1033.94px;font-size:29.6px;line-height:29.6px;font-weight:400;color:#111418;transform:scaleX(1.1625);transform-origin:0 0;">-</div>
<div class="t" style="left:2562.19px;top:1033.94px;font-size:29.6px;line-height:29.6px;font-weight:400;color:#111418;transform:scaleX(1.1625);transform-origin:0 0;">-</div>
<div class="t" style="left:2730.19px;top:1033.94px;font-size:29.6px;line-height:29.6px;font-weight:400;color:#111418;transform:scaleX(1.1625);transform-origin:0 0;">-</div>
<div class="t" style="left:2896.89px;top:1033.94px;font-size:29.6px;line-height:29.6px;font-weight:400;color:#111418;transform:scaleX(1.1625);transform-origin:0 0;">-</div>
<div class="t" style="left:3061.99px;top:1033.94px;font-size:29.6px;line-height:29.6px;font-weight:400;color:#111418;transform:scaleX(1.1625);transform-origin:0 0;">-</div>
<div class="t" style="left:3220.79px;top:1033.94px;font-size:29.6px;line-height:29.6px;font-weight:400;color:#d9730b;transform:scaleX(1.1625);transform-origin:0 0;">-</div>
<div class="t" style="left:3375.19px;top:1033.94px;font-size:29.6px;line-height:29.6px;font-weight:400;color:#dc0f3c;transform:scaleX(1.1625);transform-origin:0 0;">-</div>
<div class="t" style="left:3531.99px;top:1033.94px;font-size:29.6px;line-height:29.6px;font-weight:400;color:#111418;transform:scaleX(1.1625);transform-origin:0 0;">-</div>
<div class="t" style="left:3703.19px;top:1033.94px;font-size:29.6px;line-height:29.6px;font-weight:400;color:#111418;transform:scaleX(1.1625);transform-origin:0 0;">-</div>
<div class="t" style="left:627.80px;top:1113.94px;font-size:29.6px;line-height:29.6px;font-weight:400;color:#111418;letter-spacing:0.473px;">Start of the day</div>
<div class="t" style="left:1123.99px;top:1113.94px;font-size:29.6px;line-height:29.6px;font-weight:400;color:#dc0f3c;transform:scaleX(1.1625);transform-origin:0 0;">-</div>
<div class="t" style="left:1250.00px;top:1113.94px;font-size:29.6px;line-height:29.6px;font-weight:400;color:#111418;letter-spacing:0.351px;">07:36</div>
<div class="t" style="left:1408.50px;top:1113.94px;font-size:29.6px;line-height:29.6px;font-weight:400;color:#111418;letter-spacing:0.351px;">07:36</div>
<div class="t" style="left:1566.80px;top:1113.94px;font-size:29.6px;line-height:29.6px;font-weight:400;color:#111418;letter-spacing:0.351px;">07:36</div>
<div class="t" style="left:1730.00px;top:1113.94px;font-size:29.6px;line-height:29.6px;font-weight:400;color:#111418;letter-spacing:0.351px;">07:36</div>
<div class="t" style="left:1891.75px;top:1113.94px;font-size:29.6px;line-height:29.6px;font-weight:400;color:#111418;letter-spacing:0.351px;">07:36</div>
<div class="t" style="left:2080.79px;top:1113.94px;font-size:29.6px;line-height:29.6px;font-weight:400;color:#d9730b;transform:scaleX(1.1625);transform-origin:0 0;">-</div>
<div class="t" style="left:2235.29px;top:1113.94px;font-size:29.6px;line-height:29.6px;font-weight:400;color:#dc0f3c;transform:scaleX(1.1625);transform-origin:0 0;">-</div>
<div class="t" style="left:2363.05px;top:1113.94px;font-size:29.6px;line-height:29.6px;font-weight:400;color:#111418;letter-spacing:0.276px;">07:20</div>
<div class="t" style="left:2533.20px;top:1113.94px;font-size:29.6px;line-height:29.6px;font-weight:400;color:#111418;letter-spacing:-1.249px;">07:19</div>
<div class="t" style="left:2701.20px;top:1113.94px;font-size:29.6px;line-height:29.6px;font-weight:400;color:#111418;letter-spacing:-1.249px;">07:19</div>
<div class="t" style="left:2867.90px;top:1113.94px;font-size:29.6px;line-height:29.6px;font-weight:400;color:#111418;letter-spacing:-1.249px;">07:19</div>
<div class="t" style="left:3033.00px;top:1113.94px;font-size:29.6px;line-height:29.6px;font-weight:400;color:#111418;letter-spacing:-1.249px;">07:19</div>
<div class="t" style="left:3220.79px;top:1113.94px;font-size:29.6px;line-height:29.6px;font-weight:400;color:#d9730b;transform:scaleX(1.1625);transform-origin:0 0;">-</div>
<div class="t" style="left:3375.19px;top:1113.94px;font-size:29.6px;line-height:29.6px;font-weight:400;color:#dc0f3c;transform:scaleX(1.1625);transform-origin:0 0;">-</div>
<div class="t" style="left:3502.30px;top:1113.94px;font-size:29.6px;line-height:29.6px;font-weight:400;color:#111418;letter-spacing:-0.899px;">07:21</div>
<div class="t" style="left:3703.19px;top:1113.94px;font-size:29.6px;line-height:29.6px;font-weight:400;color:#111418;transform:scaleX(1.1625);transform-origin:0 0;">-</div>
<svg class="ic" style="left:3626px;top:1169.0px;width:166px;height:80.0px" viewBox="0 0 166 80.0" preserveAspectRatio="none"><polygon points="0,0 166,0 166,5 17.0,80.0 0,80.0" fill="#ffffff"/></svg>
<div class="t" style="left:626.80px;top:1193.94px;font-size:29.6px;line-height:29.6px;font-weight:400;color:#111418;letter-spacing:0.380px;">End of the day</div>
<div class="t" style="left:1123.99px;top:1193.94px;font-size:29.6px;line-height:29.6px;font-weight:400;color:#dc0f3c;transform:scaleX(1.1625);transform-origin:0 0;">-</div>
<div class="t" style="left:1250.00px;top:1193.94px;font-size:29.6px;line-height:29.6px;font-weight:400;color:#111418;letter-spacing:0.351px;">07:36</div>
<div class="t" style="left:1408.50px;top:1193.94px;font-size:29.6px;line-height:29.6px;font-weight:400;color:#111418;letter-spacing:0.351px;">07:36</div>
<div class="t" style="left:1566.80px;top:1193.94px;font-size:29.6px;line-height:29.6px;font-weight:400;color:#111418;letter-spacing:0.351px;">07:36</div>
<div class="t" style="left:1730.00px;top:1193.94px;font-size:29.6px;line-height:29.6px;font-weight:400;color:#111418;letter-spacing:0.351px;">07:36</div>
<div class="t" style="left:1895.45px;top:1193.94px;font-size:29.6px;line-height:29.6px;font-weight:400;color:#111418;letter-spacing:-1.749px;">15:10</div>
<div class="t" style="left:2080.79px;top:1193.94px;font-size:29.6px;line-height:29.6px;font-weight:400;color:#d9730b;transform:scaleX(1.1625);transform-origin:0 0;">-</div>
<div class="t" style="left:2235.29px;top:1193.94px;font-size:29.6px;line-height:29.6px;font-weight:400;color:#dc0f3c;transform:scaleX(1.1625);transform-origin:0 0;">-</div>
<div class="t" style="left:2366.50px;top:1193.94px;font-size:29.6px;line-height:29.6px;font-weight:400;color:#111418;letter-spacing:-1.449px;">07:18</div>
<div class="t" style="left:2533.20px;top:1193.94px;font-size:29.6px;line-height:29.6px;font-weight:400;color:#111418;letter-spacing:-1.249px;">07:19</div>
<div class="t" style="left:2701.20px;top:1193.94px;font-size:29.6px;line-height:29.6px;font-weight:400;color:#111418;letter-spacing:-1.249px;">07:19</div>
<div class="t" style="left:2867.90px;top:1193.94px;font-size:29.6px;line-height:29.6px;font-weight:400;color:#111418;letter-spacing:-1.249px;">07:19</div>
<div class="t" style="left:3032.80px;top:1193.94px;font-size:29.6px;line-height:29.6px;font-weight:400;color:#111418;letter-spacing:-1.399px;">16:21</div>
<div class="t" style="left:3220.79px;top:1193.94px;font-size:29.6px;line-height:29.6px;font-weight:400;color:#d9730b;transform:scaleX(1.1625);transform-origin:0 0;">-</div>
<div class="t" style="left:3375.19px;top:1193.94px;font-size:29.6px;line-height:29.6px;font-weight:400;color:#dc0f3c;transform:scaleX(1.1625);transform-origin:0 0;">-</div>
<div class="t" style="left:3498.55px;top:1193.94px;font-size:29.6px;line-height:29.6px;font-weight:400;color:#111418;letter-spacing:0.976px;">22:00</div>
<div class="t" style="left:3703.19px;top:1193.94px;font-size:29.6px;line-height:29.6px;font-weight:400;color:#111418;transform:scaleX(1.1625);transform-origin:0 0;">-</div>
<svg class="ic" style="left:3626px;top:1249.0px;width:166px;height:86.3px" viewBox="0 0 166 86.3" preserveAspectRatio="none"><polygon points="0,0 166,0 166,5 62.0,86.3 0,86.3" fill="#ffffff"/></svg>
<div class="t" style="left:628.80px;top:1276.94px;font-size:29.6px;line-height:29.6px;font-weight:700;color:#111418;letter-spacing:-0.214px;">Total work</div>
<svg class="ic" style="left:989px;top:1272.15px;width:40px;height:40px;" viewBox="0 0 24 24" fill="none" stroke="#6b7077" stroke-width="2" stroke-linecap="round" stroke-linejoin="round"><path d="M6 9l6 6l6 -6"/></svg>
<div class="t" style="left:1123.67px;top:1276.94px;font-size:29.6px;line-height:29.6px;font-weight:700;color:#dc0f3c;transform:scaleX(1.2250);transform-origin:0 0;">-</div>
<div class="t" style="left:1238.66px;top:1276.94px;font-size:29.6px;line-height:29.6px;font-weight:700;color:#111418;transform:scaleX(1.1353);transform-origin:0 0;">07'57''</div>
<div class="t" style="left:1404.31px;top:1276.94px;font-size:29.6px;line-height:29.6px;font-weight:700;color:#111418;transform:scaleX(0.9895);transform-origin:0 0;">11'21''</div>
<div class="t" style="left:1555.93px;top:1276.94px;font-size:29.6px;line-height:29.6px;font-weight:700;color:#111418;transform:scaleX(1.1247);transform-origin:0 0;">09'14''</div>
<div class="t" style="left:1719.13px;top:1276.94px;font-size:29.6px;line-height:29.6px;font-weight:700;color:#111418;transform:scaleX(1.1247);transform-origin:0 0;">10'06''</div>
<div class="t" style="left:1882.46px;top:1276.94px;font-size:29.6px;line-height:29.6px;font-weight:700;color:#111418;transform:scaleX(1.0882);transform-origin:0 0;">06'17''</div>
<div class="t" style="left:2080.47px;top:1276.94px;font-size:29.6px;line-height:29.6px;font-weight:700;color:#d9730b;transform:scaleX(1.2250);transform-origin:0 0;">-</div>
<div class="t" style="left:2234.97px;top:1276.94px;font-size:29.6px;line-height:29.6px;font-weight:700;color:#dc0f3c;transform:scaleX(1.2250);transform-origin:0 0;">-</div>
<div class="t" style="left:2350.64px;top:1276.94px;font-size:29.6px;line-height:29.6px;font-weight:700;color:#111418;transform:scaleX(1.1565);transform-origin:0 0;">07'39''</div>
<div class="t" style="left:2519.94px;top:1276.94px;font-size:29.6px;line-height:29.6px;font-weight:700;color:#111418;transform:scaleX(1.1059);transform-origin:0 0;">10'53''</div>
<div class="t" style="left:2688.00px;top:1276.94px;font-size:29.6px;line-height:29.6px;font-weight:700;color:#111418;transform:scaleX(1.1047);transform-origin:0 0;">06'12''</div>
<div class="t" style="left:2854.70px;top:1276.94px;font-size:29.6px;line-height:29.6px;font-weight:700;color:#111418;transform:scaleX(1.1047);transform-origin:0 0;">09'21''</div>
<div class="t" style="left:3018.41px;top:1276.94px;font-size:29.6px;line-height:29.6px;font-weight:700;color:#111418;transform:scaleX(1.1365);transform-origin:0 0;">07'27''</div>
<div class="t" style="left:3220.47px;top:1276.94px;font-size:29.6px;line-height:29.6px;font-weight:700;color:#d9730b;transform:scaleX(1.2250);transform-origin:0 0;">-</div>
<div class="t" style="left:3374.88px;top:1276.94px;font-size:29.6px;line-height:29.6px;font-weight:700;color:#dc0f3c;transform:scaleX(1.2250);transform-origin:0 0;">-</div>
<div class="t" style="left:3490.41px;top:1276.94px;font-size:29.6px;line-height:29.6px;font-weight:700;color:#111418;transform:scaleX(1.0906);transform-origin:0 0;">10'27''</div>
<div class="t" style="left:3655.60px;top:1276.94px;font-size:29.6px;line-height:29.6px;font-weight:700;color:#111418;transform:scaleX(1.0498);transform-origin:0 0;">114'47''</div>
<svg class="ic" style="left:3626px;top:1335.3px;width:166px;height:86.0px" viewBox="0 0 166 86.0" preserveAspectRatio="none"><polygon points="0,0 166,0 166,5 60.0,86.0 0,86.0" fill="#ffffff"/></svg>
<div class="t" style="left:628.80px;top:1363.24px;font-size:29.6px;line-height:29.6px;font-weight:700;color:#111418;letter-spacing:-0.123px;">Total work - Germany</div>
<svg class="ic" style="left:989px;top:1358.3px;width:40px;height:40px;" viewBox="0 0 24 24" fill="none" stroke="#6b7077" stroke-width="2" stroke-linecap="round" stroke-linejoin="round"><path d="M6 9l6 6l6 -6"/></svg>
<div class="t" style="left:1123.67px;top:1363.24px;font-size:29.6px;line-height:29.6px;font-weight:700;color:#dc0f3c;transform:scaleX(1.2250);transform-origin:0 0;">-</div>
<div class="t" style="left:1281.88px;top:1363.24px;font-size:29.6px;line-height:29.6px;font-weight:700;color:#111418;transform:scaleX(1.2250);transform-origin:0 0;">-</div>
<div class="t" style="left:1440.38px;top:1363.24px;font-size:29.6px;line-height:29.6px;font-weight:700;color:#111418;transform:scaleX(1.2250);transform-origin:0 0;">-</div>
<div class="t" style="left:1598.67px;top:1363.24px;font-size:29.6px;line-height:29.6px;font-weight:700;color:#111418;transform:scaleX(1.2250);transform-origin:0 0;">-</div>
<div class="t" style="left:1761.88px;top:1363.24px;font-size:29.6px;line-height:29.6px;font-weight:700;color:#111418;transform:scaleX(1.2250);transform-origin:0 0;">-</div>
<div class="t" style="left:1923.62px;top:1363.24px;font-size:29.6px;line-height:29.6px;font-weight:700;color:#111418;transform:scaleX(1.2250);transform-origin:0 0;">-</div>
<div class="t" style="left:2080.47px;top:1363.24px;font-size:29.6px;line-height:29.6px;font-weight:700;color:#d9730b;transform:scaleX(1.2250);transform-origin:0 0;">-</div>
<div class="t" style="left:2234.97px;top:1363.24px;font-size:29.6px;line-height:29.6px;font-weight:700;color:#dc0f3c;transform:scaleX(1.2250);transform-origin:0 0;">-</div>
<div class="t" style="left:2394.78px;top:1363.24px;font-size:29.6px;line-height:29.6px;font-weight:700;color:#111418;transform:scaleX(1.2250);transform-origin:0 0;">-</div>
<div class="t" style="left:2516.46px;top:1363.24px;font-size:29.6px;line-height:29.6px;font-weight:700;color:#111418;transform:scaleX(1.1860);transform-origin:0 0;">06'20''</div>
<div class="t" style="left:2685.18px;top:1363.24px;font-size:29.6px;line-height:29.6px;font-weight:700;color:#111418;transform:scaleX(1.1695);transform-origin:0 0;">04'25''</div>
<div class="t" style="left:2852.14px;top:1363.24px;font-size:29.6px;line-height:29.6px;font-weight:700;color:#111418;transform:scaleX(1.1636);transform-origin:0 0;">09'07''</div>
<div class="t" style="left:3061.68px;top:1363.24px;font-size:29.6px;line-height:29.6px;font-weight:700;color:#111418;transform:scaleX(1.2250);transform-origin:0 0;">-</div>
<div class="t" style="left:3220.47px;top:1363.24px;font-size:29.6px;line-height:29.6px;font-weight:700;color:#d9730b;transform:scaleX(1.2250);transform-origin:0 0;">-</div>
<div class="t" style="left:3374.88px;top:1363.24px;font-size:29.6px;line-height:29.6px;font-weight:700;color:#dc0f3c;transform:scaleX(1.2250);transform-origin:0 0;">-</div>
<div class="t" style="left:3531.68px;top:1363.24px;font-size:29.6px;line-height:29.6px;font-weight:700;color:#111418;transform:scaleX(1.2250);transform-origin:0 0;">-</div>
<div class="t" style="left:3657.72px;top:1363.24px;font-size:29.6px;line-height:29.6px;font-weight:700;color:#111418;transform:scaleX(1.1801);transform-origin:0 0;">24'54''</div>
<svg class="ic" style="left:3626px;top:1421.3px;width:166px;height:86.3px" viewBox="0 0 166 86.3" preserveAspectRatio="none"><polygon points="0,0 166,0 166,5 48.0,86.3 0,86.3" fill="#ffffff"/></svg>
<div class="t" style="left:628.80px;top:1449.24px;font-size:29.6px;line-height:29.6px;font-weight:700;color:#111418;letter-spacing:0.084px;">Total work - Netherlands</div>
<svg class="ic" style="left:989px;top:1444.45px;width:40px;height:40px;" viewBox="0 0 24 24" fill="none" stroke="#6b7077" stroke-width="2" stroke-linecap="round" stroke-linejoin="round"><path d="M6 9l6 6l6 -6"/></svg>
<div class="t" style="left:1123.67px;top:1449.24px;font-size:29.6px;line-height:29.6px;font-weight:700;color:#dc0f3c;transform:scaleX(1.2250);transform-origin:0 0;">-</div>
<div class="t" style="left:1281.88px;top:1449.24px;font-size:29.6px;line-height:29.6px;font-weight:700;color:#111418;transform:scaleX(1.2250);transform-origin:0 0;">-</div>
<div class="t" style="left:1440.38px;top:1449.24px;font-size:29.6px;line-height:29.6px;font-weight:700;color:#111418;transform:scaleX(1.2250);transform-origin:0 0;">-</div>
<div class="t" style="left:1598.67px;top:1449.24px;font-size:29.6px;line-height:29.6px;font-weight:700;color:#111418;transform:scaleX(1.2250);transform-origin:0 0;">-</div>
<div class="t" style="left:1761.88px;top:1449.24px;font-size:29.6px;line-height:29.6px;font-weight:700;color:#111418;transform:scaleX(1.2250);transform-origin:0 0;">-</div>
<div class="t" style="left:1923.62px;top:1449.24px;font-size:29.6px;line-height:29.6px;font-weight:700;color:#111418;transform:scaleX(1.2250);transform-origin:0 0;">-</div>
<div class="t" style="left:2080.47px;top:1449.24px;font-size:29.6px;line-height:29.6px;font-weight:700;color:#d9730b;transform:scaleX(1.2250);transform-origin:0 0;">-</div>
<div class="t" style="left:2234.97px;top:1449.24px;font-size:29.6px;line-height:29.6px;font-weight:700;color:#dc0f3c;transform:scaleX(1.2250);transform-origin:0 0;">-</div>
<div class="t" style="left:2394.78px;top:1449.24px;font-size:29.6px;line-height:29.6px;font-weight:700;color:#111418;transform:scaleX(1.2250);transform-origin:0 0;">-</div>
<div class="t" style="left:2561.88px;top:1449.24px;font-size:29.6px;line-height:29.6px;font-weight:700;color:#111418;transform:scaleX(1.2250);transform-origin:0 0;">-</div>
<div class="t" style="left:2688.81px;top:1449.24px;font-size:29.6px;line-height:29.6px;font-weight:700;color:#111418;transform:scaleX(1.0859);transform-origin:0 0;">01'43''</div>
<div class="t" style="left:2896.57px;top:1449.24px;font-size:29.6px;line-height:29.6px;font-weight:700;color:#111418;transform:scaleX(1.2250);transform-origin:0 0;">-</div>
<div class="t" style="left:3061.68px;top:1449.24px;font-size:29.6px;line-height:29.6px;font-weight:700;color:#111418;transform:scaleX(1.2250);transform-origin:0 0;">-</div>
<div class="t" style="left:3220.47px;top:1449.24px;font-size:29.6px;line-height:29.6px;font-weight:700;color:#d9730b;transform:scaleX(1.2250);transform-origin:0 0;">-</div>
<div class="t" style="left:3374.88px;top:1449.24px;font-size:29.6px;line-height:29.6px;font-weight:700;color:#dc0f3c;transform:scaleX(1.2250);transform-origin:0 0;">-</div>
<div class="t" style="left:3531.68px;top:1449.24px;font-size:29.6px;line-height:29.6px;font-weight:700;color:#111418;transform:scaleX(1.2250);transform-origin:0 0;">-</div>
<div class="t" style="left:3661.81px;top:1449.24px;font-size:29.6px;line-height:29.6px;font-weight:700;color:#111418;transform:scaleX(1.0859);transform-origin:0 0;">01'43''</div>
<svg class="ic" style="left:3626px;top:1507.6px;width:166px;height:80.0px" viewBox="0 0 166 80.0" preserveAspectRatio="none"><polygon points="0,0 166,0 166,5 15.5,80.0 0,80.0" fill="#ffffff"/></svg>
<div class="t" style="left:627.80px;top:1532.54px;font-size:29.6px;line-height:29.6px;font-weight:400;color:#111418;letter-spacing:0.542px;">On-call 50%</div>
<div class="t" style="left:1123.99px;top:1532.54px;font-size:29.6px;line-height:29.6px;font-weight:400;color:#dc0f3c;transform:scaleX(1.1625);transform-origin:0 0;">-</div>
<div class="t" style="left:1282.19px;top:1532.54px;font-size:29.6px;line-height:29.6px;font-weight:400;color:#111418;transform:scaleX(1.1625);transform-origin:0 0;">-</div>
<div class="t" style="left:1440.69px;top:1532.54px;font-size:29.6px;line-height:29.6px;font-weight:400;color:#111418;transform:scaleX(1.1625);transform-origin:0 0;">-</div>
<div class="t" style="left:1598.99px;top:1532.54px;font-size:29.6px;line-height:29.6px;font-weight:400;color:#111418;transform:scaleX(1.1625);transform-origin:0 0;">-</div>
<div class="t" style="left:1762.19px;top:1532.54px;font-size:29.6px;line-height:29.6px;font-weight:400;color:#111418;transform:scaleX(1.1625);transform-origin:0 0;">-</div>
<div class="t" style="left:1923.94px;top:1532.54px;font-size:29.6px;line-height:29.6px;font-weight:400;color:#111418;transform:scaleX(1.1625);transform-origin:0 0;">-</div>
<div class="t" style="left:2080.79px;top:1532.54px;font-size:29.6px;line-height:29.6px;font-weight:400;color:#d9730b;transform:scaleX(1.1625);transform-origin:0 0;">-</div>
<div class="t" style="left:2235.29px;top:1532.54px;font-size:29.6px;line-height:29.6px;font-weight:400;color:#dc0f3c;transform:scaleX(1.1625);transform-origin:0 0;">-</div>
<div class="t" style="left:2395.09px;top:1532.54px;font-size:29.6px;line-height:29.6px;font-weight:400;color:#111418;transform:scaleX(1.1625);transform-origin:0 0;">-</div>
<div class="t" style="left:2562.19px;top:1532.54px;font-size:29.6px;line-height:29.6px;font-weight:400;color:#111418;transform:scaleX(1.1625);transform-origin:0 0;">-</div>
<div class="t" style="left:2730.19px;top:1532.54px;font-size:29.6px;line-height:29.6px;font-weight:400;color:#111418;transform:scaleX(1.1625);transform-origin:0 0;">-</div>
<div class="t" style="left:2896.89px;top:1532.54px;font-size:29.6px;line-height:29.6px;font-weight:400;color:#111418;transform:scaleX(1.1625);transform-origin:0 0;">-</div>
<div class="t" style="left:3061.99px;top:1532.54px;font-size:29.6px;line-height:29.6px;font-weight:400;color:#111418;transform:scaleX(1.1625);transform-origin:0 0;">-</div>
<div class="t" style="left:3220.79px;top:1532.54px;font-size:29.6px;line-height:29.6px;font-weight:400;color:#d9730b;transform:scaleX(1.1625);transform-origin:0 0;">-</div>
<div class="t" style="left:3375.19px;top:1532.54px;font-size:29.6px;line-height:29.6px;font-weight:400;color:#dc0f3c;transform:scaleX(1.1625);transform-origin:0 0;">-</div>
<div class="t" style="left:3531.99px;top:1532.54px;font-size:29.6px;line-height:29.6px;font-weight:400;color:#111418;transform:scaleX(1.1625);transform-origin:0 0;">-</div>
<div class="t" style="left:3703.19px;top:1532.54px;font-size:29.6px;line-height:29.6px;font-weight:400;color:#111418;transform:scaleX(1.1625);transform-origin:0 0;">-</div>
<svg class="ic" style="left:3626px;top:1587.6px;width:166px;height:80.0px" viewBox="0 0 166 80.0" preserveAspectRatio="none"><polygon points="0,0 166,0 166,5 10.0,80.0 0,80.0" fill="#ffffff"/></svg>
<div class="t" style="left:627.80px;top:1612.54px;font-size:29.6px;line-height:29.6px;font-weight:400;color:#111418;letter-spacing:0.151px;">On-call 100%</div>
<div class="t" style="left:1123.99px;top:1612.54px;font-size:29.6px;line-height:29.6px;font-weight:400;color:#dc0f3c;transform:scaleX(1.1625);transform-origin:0 0;">-</div>
<div class="t" style="left:1282.19px;top:1612.54px;font-size:29.6px;line-height:29.6px;font-weight:400;color:#111418;transform:scaleX(1.1625);transform-origin:0 0;">-</div>
<div class="t" style="left:1440.69px;top:1612.54px;font-size:29.6px;line-height:29.6px;font-weight:400;color:#111418;transform:scaleX(1.1625);transform-origin:0 0;">-</div>
<div class="t" style="left:1598.99px;top:1612.54px;font-size:29.6px;line-height:29.6px;font-weight:400;color:#111418;transform:scaleX(1.1625);transform-origin:0 0;">-</div>
<div class="t" style="left:1762.19px;top:1612.54px;font-size:29.6px;line-height:29.6px;font-weight:400;color:#111418;transform:scaleX(1.1625);transform-origin:0 0;">-</div>
<div class="t" style="left:1923.94px;top:1612.54px;font-size:29.6px;line-height:29.6px;font-weight:400;color:#111418;transform:scaleX(1.1625);transform-origin:0 0;">-</div>
<div class="t" style="left:2080.79px;top:1612.54px;font-size:29.6px;line-height:29.6px;font-weight:400;color:#d9730b;transform:scaleX(1.1625);transform-origin:0 0;">-</div>
<div class="t" style="left:2235.29px;top:1612.54px;font-size:29.6px;line-height:29.6px;font-weight:400;color:#dc0f3c;transform:scaleX(1.1625);transform-origin:0 0;">-</div>
<div class="t" style="left:2395.09px;top:1612.54px;font-size:29.6px;line-height:29.6px;font-weight:400;color:#111418;transform:scaleX(1.1625);transform-origin:0 0;">-</div>
<div class="t" style="left:2562.19px;top:1612.54px;font-size:29.6px;line-height:29.6px;font-weight:400;color:#111418;transform:scaleX(1.1625);transform-origin:0 0;">-</div>
<div class="t" style="left:2730.19px;top:1612.54px;font-size:29.6px;line-height:29.6px;font-weight:400;color:#111418;transform:scaleX(1.1625);transform-origin:0 0;">-</div>
<div class="t" style="left:2896.89px;top:1612.54px;font-size:29.6px;line-height:29.6px;font-weight:400;color:#111418;transform:scaleX(1.1625);transform-origin:0 0;">-</div>
<div class="t" style="left:3061.99px;top:1612.54px;font-size:29.6px;line-height:29.6px;font-weight:400;color:#111418;transform:scaleX(1.1625);transform-origin:0 0;">-</div>
<div class="t" style="left:3220.79px;top:1612.54px;font-size:29.6px;line-height:29.6px;font-weight:400;color:#d9730b;transform:scaleX(1.1625);transform-origin:0 0;">-</div>
<div class="t" style="left:3375.19px;top:1612.54px;font-size:29.6px;line-height:29.6px;font-weight:400;color:#dc0f3c;transform:scaleX(1.1625);transform-origin:0 0;">-</div>
<div class="t" style="left:3531.99px;top:1612.54px;font-size:29.6px;line-height:29.6px;font-weight:400;color:#111418;transform:scaleX(1.1625);transform-origin:0 0;">-</div>
<div class="t" style="left:3703.19px;top:1612.54px;font-size:29.6px;line-height:29.6px;font-weight:400;color:#111418;transform:scaleX(1.1625);transform-origin:0 0;">-</div>
<svg class="ic" style="left:3626px;top:1667.6px;width:166px;height:80.0px" viewBox="0 0 166 80.0" preserveAspectRatio="none"><polygon points="0,0 166,0 166,5 4.0,80.0 0,80.0" fill="#ffffff"/></svg>
<div class="t" style="left:627.80px;top:1692.54px;font-size:29.6px;line-height:29.6px;font-weight:400;color:#111418;letter-spacing:0.353px;">Sun. and holidays work</div>
<div class="t" style="left:1123.99px;top:1692.54px;font-size:29.6px;line-height:29.6px;font-weight:400;color:#dc0f3c;transform:scaleX(1.1625);transform-origin:0 0;">-</div>
<div class="t" style="left:1282.19px;top:1692.54px;font-size:29.6px;line-height:29.6px;font-weight:400;color:#111418;transform:scaleX(1.1625);transform-origin:0 0;">-</div>
<div class="t" style="left:1440.69px;top:1692.54px;font-size:29.6px;line-height:29.6px;font-weight:400;color:#111418;transform:scaleX(1.1625);transform-origin:0 0;">-</div>
<div class="t" style="left:1598.99px;top:1692.54px;font-size:29.6px;line-height:29.6px;font-weight:400;color:#111418;transform:scaleX(1.1625);transform-origin:0 0;">-</div>
<div class="t" style="left:1762.19px;top:1692.54px;font-size:29.6px;line-height:29.6px;font-weight:400;color:#111418;transform:scaleX(1.1625);transform-origin:0 0;">-</div>
<div class="t" style="left:1923.94px;top:1692.54px;font-size:29.6px;line-height:29.6px;font-weight:400;color:#111418;transform:scaleX(1.1625);transform-origin:0 0;">-</div>
<div class="t" style="left:2080.79px;top:1692.54px;font-size:29.6px;line-height:29.6px;font-weight:400;color:#d9730b;transform:scaleX(1.1625);transform-origin:0 0;">-</div>
<div class="t" style="left:2235.29px;top:1692.54px;font-size:29.6px;line-height:29.6px;font-weight:400;color:#dc0f3c;transform:scaleX(1.1625);transform-origin:0 0;">-</div>
<div class="t" style="left:2395.09px;top:1692.54px;font-size:29.6px;line-height:29.6px;font-weight:400;color:#111418;transform:scaleX(1.1625);transform-origin:0 0;">-</div>
<div class="t" style="left:2562.19px;top:1692.54px;font-size:29.6px;line-height:29.6px;font-weight:400;color:#111418;transform:scaleX(1.1625);transform-origin:0 0;">-</div>
<div class="t" style="left:2730.19px;top:1692.54px;font-size:29.6px;line-height:29.6px;font-weight:400;color:#111418;transform:scaleX(1.1625);transform-origin:0 0;">-</div>
<div class="t" style="left:2896.89px;top:1692.54px;font-size:29.6px;line-height:29.6px;font-weight:400;color:#111418;transform:scaleX(1.1625);transform-origin:0 0;">-</div>
<div class="t" style="left:3061.99px;top:1692.54px;font-size:29.6px;line-height:29.6px;font-weight:400;color:#111418;transform:scaleX(1.1625);transform-origin:0 0;">-</div>
<div class="t" style="left:3220.79px;top:1692.54px;font-size:29.6px;line-height:29.6px;font-weight:400;color:#d9730b;transform:scaleX(1.1625);transform-origin:0 0;">-</div>
<div class="t" style="left:3375.19px;top:1692.54px;font-size:29.6px;line-height:29.6px;font-weight:400;color:#dc0f3c;transform:scaleX(1.1625);transform-origin:0 0;">-</div>
<div class="t" style="left:3531.99px;top:1692.54px;font-size:29.6px;line-height:29.6px;font-weight:400;color:#111418;transform:scaleX(1.1625);transform-origin:0 0;">-</div>
<div class="t" style="left:3703.19px;top:1692.54px;font-size:29.6px;line-height:29.6px;font-weight:400;color:#111418;transform:scaleX(1.1625);transform-origin:0 0;">-</div>
<svg class="ic" style="left:3626px;top:1747.6px;width:166px;height:80.0px" viewBox="0 0 166 80.0" preserveAspectRatio="none"><polygon points="0,0 166,0 166,5 17.6,80.0 0,80.0" fill="#ffffff"/></svg>
<div class="t" style="left:626.80px;top:1772.54px;font-size:29.6px;line-height:29.6px;font-weight:400;color:#111418;letter-spacing:0.856px;">Night work</div>
<div class="t" style="left:1123.99px;top:1772.54px;font-size:29.6px;line-height:29.6px;font-weight:400;color:#dc0f3c;transform:scaleX(1.1625);transform-origin:0 0;">-</div>
<div class="t" style="left:1282.19px;top:1772.54px;font-size:29.6px;line-height:29.6px;font-weight:400;color:#111418;transform:scaleX(1.1625);transform-origin:0 0;">-</div>
<div class="t" style="left:1440.69px;top:1772.54px;font-size:29.6px;line-height:29.6px;font-weight:400;color:#111418;transform:scaleX(1.1625);transform-origin:0 0;">-</div>
<div class="t" style="left:1598.99px;top:1772.54px;font-size:29.6px;line-height:29.6px;font-weight:400;color:#111418;transform:scaleX(1.1625);transform-origin:0 0;">-</div>
<div class="t" style="left:1762.19px;top:1772.54px;font-size:29.6px;line-height:29.6px;font-weight:400;color:#111418;transform:scaleX(1.1625);transform-origin:0 0;">-</div>
<div class="t" style="left:1923.94px;top:1772.54px;font-size:29.6px;line-height:29.6px;font-weight:400;color:#111418;transform:scaleX(1.1625);transform-origin:0 0;">-</div>
<div class="t" style="left:2080.79px;top:1772.54px;font-size:29.6px;line-height:29.6px;font-weight:400;color:#d9730b;transform:scaleX(1.1625);transform-origin:0 0;">-</div>
<div class="t" style="left:2235.29px;top:1772.54px;font-size:29.6px;line-height:29.6px;font-weight:400;color:#dc0f3c;transform:scaleX(1.1625);transform-origin:0 0;">-</div>
<div class="t" style="left:2395.09px;top:1772.54px;font-size:29.6px;line-height:29.6px;font-weight:400;color:#111418;transform:scaleX(1.1625);transform-origin:0 0;">-</div>
<div class="t" style="left:2562.19px;top:1772.54px;font-size:29.6px;line-height:29.6px;font-weight:400;color:#111418;transform:scaleX(1.1625);transform-origin:0 0;">-</div>
<div class="t" style="left:2730.19px;top:1772.54px;font-size:29.6px;line-height:29.6px;font-weight:400;color:#111418;transform:scaleX(1.1625);transform-origin:0 0;">-</div>
<div class="t" style="left:2896.89px;top:1772.54px;font-size:29.6px;line-height:29.6px;font-weight:400;color:#111418;transform:scaleX(1.1625);transform-origin:0 0;">-</div>
<div class="t" style="left:3061.99px;top:1772.54px;font-size:29.6px;line-height:29.6px;font-weight:400;color:#111418;transform:scaleX(1.1625);transform-origin:0 0;">-</div>
<div class="t" style="left:3220.79px;top:1772.54px;font-size:29.6px;line-height:29.6px;font-weight:400;color:#d9730b;transform:scaleX(1.1625);transform-origin:0 0;">-</div>
<div class="t" style="left:3375.19px;top:1772.54px;font-size:29.6px;line-height:29.6px;font-weight:400;color:#dc0f3c;transform:scaleX(1.1625);transform-origin:0 0;">-</div>
<div class="t" style="left:3531.99px;top:1772.54px;font-size:29.6px;line-height:29.6px;font-weight:400;color:#111418;transform:scaleX(1.1625);transform-origin:0 0;">-</div>
<div class="t" style="left:3703.19px;top:1772.54px;font-size:29.6px;line-height:29.6px;font-weight:400;color:#111418;transform:scaleX(1.1625);transform-origin:0 0;">-</div>
<svg class="ic" style="left:3626px;top:1827.6px;width:166px;height:86.3px" viewBox="0 0 166 86.3" preserveAspectRatio="none"><polygon points="0,0 166,0 166,5 11.7,86.3 0,86.3" fill="#ffffff"/></svg>
<div class="t" style="left:627.80px;top:1855.54px;font-size:29.6px;line-height:29.6px;font-weight:700;color:#111418;letter-spacing:-0.066px;">Daily overtime</div>
<svg class="ic" style="left:989px;top:1850.75px;width:40px;height:40px;" viewBox="0 0 24 24" fill="none" stroke="#6b7077" stroke-width="2" stroke-linecap="round" stroke-linejoin="round"><path d="M6 9l6 6l6 -6"/></svg>
<div class="t" style="left:1123.67px;top:1855.54px;font-size:29.6px;line-height:29.6px;font-weight:700;color:#dc0f3c;transform:scaleX(1.2250);transform-origin:0 0;">-</div>
<div class="t" style="left:1281.88px;top:1855.54px;font-size:29.6px;line-height:29.6px;font-weight:700;color:#111418;transform:scaleX(1.2250);transform-origin:0 0;">-</div>
<div class="t" style="left:1440.38px;top:1855.54px;font-size:29.6px;line-height:29.6px;font-weight:700;color:#111418;transform:scaleX(1.2250);transform-origin:0 0;">-</div>
<div class="t" style="left:1598.67px;top:1855.54px;font-size:29.6px;line-height:29.6px;font-weight:700;color:#111418;transform:scaleX(1.2250);transform-origin:0 0;">-</div>
<div class="t" style="left:1761.88px;top:1855.54px;font-size:29.6px;line-height:29.6px;font-weight:700;color:#111418;transform:scaleX(1.2250);transform-origin:0 0;">-</div>
<div class="t" style="left:1923.62px;top:1855.54px;font-size:29.6px;line-height:29.6px;font-weight:700;color:#111418;transform:scaleX(1.2250);transform-origin:0 0;">-</div>
<div class="t" style="left:2080.47px;top:1855.54px;font-size:29.6px;line-height:29.6px;font-weight:700;color:#d9730b;transform:scaleX(1.2250);transform-origin:0 0;">-</div>
<div class="t" style="left:2234.97px;top:1855.54px;font-size:29.6px;line-height:29.6px;font-weight:700;color:#dc0f3c;transform:scaleX(1.2250);transform-origin:0 0;">-</div>
<div class="t" style="left:2394.78px;top:1855.54px;font-size:29.6px;line-height:29.6px;font-weight:700;color:#111418;transform:scaleX(1.2250);transform-origin:0 0;">-</div>
<div class="t" style="left:2561.88px;top:1855.54px;font-size:29.6px;line-height:29.6px;font-weight:700;color:#111418;transform:scaleX(1.2250);transform-origin:0 0;">-</div>
<div class="t" style="left:2729.88px;top:1855.54px;font-size:29.6px;line-height:29.6px;font-weight:700;color:#111418;transform:scaleX(1.2250);transform-origin:0 0;">-</div>
<div class="t" style="left:2896.57px;top:1855.54px;font-size:29.6px;line-height:29.6px;font-weight:700;color:#111418;transform:scaleX(1.2250);transform-origin:0 0;">-</div>
<div class="t" style="left:3061.68px;top:1855.54px;font-size:29.6px;line-height:29.6px;font-weight:700;color:#111418;transform:scaleX(1.2250);transform-origin:0 0;">-</div>
<div class="t" style="left:3220.47px;top:1855.54px;font-size:29.6px;line-height:29.6px;font-weight:700;color:#d9730b;transform:scaleX(1.2250);transform-origin:0 0;">-</div>
<div class="t" style="left:3374.88px;top:1855.54px;font-size:29.6px;line-height:29.6px;font-weight:700;color:#dc0f3c;transform:scaleX(1.2250);transform-origin:0 0;">-</div>
<div class="t" style="left:3531.68px;top:1855.54px;font-size:29.6px;line-height:29.6px;font-weight:700;color:#111418;transform:scaleX(1.2250);transform-origin:0 0;">-</div>
<div class="t" style="left:3702.88px;top:1855.54px;font-size:29.6px;line-height:29.6px;font-weight:700;color:#111418;transform:scaleX(1.2250);transform-origin:0 0;">-</div>
<div class="t" style="left:627.80px;top:1941.84px;font-size:29.6px;line-height:29.6px;font-weight:700;color:#111418;letter-spacing:0.033px;">Overtime collected</div>
<svg class="ic" style="left:989px;top:1937.05px;width:40px;height:40px;" viewBox="0 0 24 24" fill="none" stroke="#6b7077" stroke-width="2" stroke-linecap="round" stroke-linejoin="round"><path d="M6 9l6 6l6 -6"/></svg>
<div class="t" style="left:1123.67px;top:1941.84px;font-size:29.6px;line-height:29.6px;font-weight:700;color:#dc0f3c;transform:scaleX(1.2250);transform-origin:0 0;">-</div>
<div class="t" style="left:1281.88px;top:1941.84px;font-size:29.6px;line-height:29.6px;font-weight:700;color:#111418;transform:scaleX(1.2250);transform-origin:0 0;">-</div>
<div class="t" style="left:1440.38px;top:1941.84px;font-size:29.6px;line-height:29.6px;font-weight:700;color:#111418;transform:scaleX(1.2250);transform-origin:0 0;">-</div>
<div class="t" style="left:1598.67px;top:1941.84px;font-size:29.6px;line-height:29.6px;font-weight:700;color:#111418;transform:scaleX(1.2250);transform-origin:0 0;">-</div>
<div class="t" style="left:1761.88px;top:1941.84px;font-size:29.6px;line-height:29.6px;font-weight:700;color:#111418;transform:scaleX(1.2250);transform-origin:0 0;">-</div>
<div class="t" style="left:1923.62px;top:1941.84px;font-size:29.6px;line-height:29.6px;font-weight:700;color:#111418;transform:scaleX(1.2250);transform-origin:0 0;">-</div>
<div class="t" style="left:2080.47px;top:1941.84px;font-size:29.6px;line-height:29.6px;font-weight:700;color:#d9730b;transform:scaleX(1.2250);transform-origin:0 0;">-</div>
<div class="t" style="left:2234.97px;top:1941.84px;font-size:29.6px;line-height:29.6px;font-weight:700;color:#dc0f3c;transform:scaleX(1.2250);transform-origin:0 0;">-</div>
<div class="t" style="left:2394.78px;top:1941.84px;font-size:29.6px;line-height:29.6px;font-weight:700;color:#111418;transform:scaleX(1.2250);transform-origin:0 0;">-</div>
<div class="t" style="left:2561.88px;top:1941.84px;font-size:29.6px;line-height:29.6px;font-weight:700;color:#111418;transform:scaleX(1.2250);transform-origin:0 0;">-</div>
<div class="t" style="left:2729.88px;top:1941.84px;font-size:29.6px;line-height:29.6px;font-weight:700;color:#111418;transform:scaleX(1.2250);transform-origin:0 0;">-</div>
<div class="t" style="left:2896.57px;top:1941.84px;font-size:29.6px;line-height:29.6px;font-weight:700;color:#111418;transform:scaleX(1.2250);transform-origin:0 0;">-</div>
<div class="t" style="left:3061.68px;top:1941.84px;font-size:29.6px;line-height:29.6px;font-weight:700;color:#111418;transform:scaleX(1.2250);transform-origin:0 0;">-</div>
<div class="t" style="left:3220.47px;top:1941.84px;font-size:29.6px;line-height:29.6px;font-weight:700;color:#d9730b;transform:scaleX(1.2250);transform-origin:0 0;">-</div>
<div class="t" style="left:3374.88px;top:1941.84px;font-size:29.6px;line-height:29.6px;font-weight:700;color:#dc0f3c;transform:scaleX(1.2250);transform-origin:0 0;">-</div>
<div class="t" style="left:3531.68px;top:1941.84px;font-size:29.6px;line-height:29.6px;font-weight:700;color:#111418;transform:scaleX(1.2250);transform-origin:0 0;">-</div>
<div class="t" style="left:3702.88px;top:1941.84px;font-size:29.6px;line-height:29.6px;font-weight:700;color:#111418;transform:scaleX(1.2250);transform-origin:0 0;">-</div>
<svg class="ic" style="left:3626px;top:2000.2px;width:166px;height:80.0px" viewBox="0 0 166 80.0" preserveAspectRatio="none"><polygon points="0,0 166,0 166,5 17.6,80.0 0,80.0" fill="#ffffff"/></svg>
<div class="t" style="left:628.80px;top:2025.14px;font-size:29.6px;line-height:29.6px;font-weight:400;color:#111418;letter-spacing:0.727px;">Time off for overtime</div>
<div class="t" style="left:1123.99px;top:2025.14px;font-size:29.6px;line-height:29.6px;font-weight:400;color:#dc0f3c;transform:scaleX(1.1625);transform-origin:0 0;">-</div>
<div class="t" style="left:1282.19px;top:2025.14px;font-size:29.6px;line-height:29.6px;font-weight:400;color:#111418;transform:scaleX(1.1625);transform-origin:0 0;">-</div>
<div class="t" style="left:1440.69px;top:2025.14px;font-size:29.6px;line-height:29.6px;font-weight:400;color:#111418;transform:scaleX(1.1625);transform-origin:0 0;">-</div>
<div class="t" style="left:1598.99px;top:2025.14px;font-size:29.6px;line-height:29.6px;font-weight:400;color:#111418;transform:scaleX(1.1625);transform-origin:0 0;">-</div>
<div class="t" style="left:1762.19px;top:2025.14px;font-size:29.6px;line-height:29.6px;font-weight:400;color:#111418;transform:scaleX(1.1625);transform-origin:0 0;">-</div>
<div class="t" style="left:1923.94px;top:2025.14px;font-size:29.6px;line-height:29.6px;font-weight:400;color:#111418;transform:scaleX(1.1625);transform-origin:0 0;">-</div>
<div class="t" style="left:2080.79px;top:2025.14px;font-size:29.6px;line-height:29.6px;font-weight:400;color:#d9730b;transform:scaleX(1.1625);transform-origin:0 0;">-</div>
<div class="t" style="left:2235.29px;top:2025.14px;font-size:29.6px;line-height:29.6px;font-weight:400;color:#dc0f3c;transform:scaleX(1.1625);transform-origin:0 0;">-</div>
<div class="t" style="left:2395.09px;top:2025.14px;font-size:29.6px;line-height:29.6px;font-weight:400;color:#111418;transform:scaleX(1.1625);transform-origin:0 0;">-</div>
<div class="t" style="left:2562.19px;top:2025.14px;font-size:29.6px;line-height:29.6px;font-weight:400;color:#111418;transform:scaleX(1.1625);transform-origin:0 0;">-</div>
<div class="t" style="left:2730.19px;top:2025.14px;font-size:29.6px;line-height:29.6px;font-weight:400;color:#111418;transform:scaleX(1.1625);transform-origin:0 0;">-</div>
<div class="t" style="left:2896.89px;top:2025.14px;font-size:29.6px;line-height:29.6px;font-weight:400;color:#111418;transform:scaleX(1.1625);transform-origin:0 0;">-</div>
<div class="t" style="left:3061.99px;top:2025.14px;font-size:29.6px;line-height:29.6px;font-weight:400;color:#111418;transform:scaleX(1.1625);transform-origin:0 0;">-</div>
<div class="t" style="left:3220.79px;top:2025.14px;font-size:29.6px;line-height:29.6px;font-weight:400;color:#d9730b;transform:scaleX(1.1625);transform-origin:0 0;">-</div>
<div class="t" style="left:3375.19px;top:2025.14px;font-size:29.6px;line-height:29.6px;font-weight:400;color:#dc0f3c;transform:scaleX(1.1625);transform-origin:0 0;">-</div>
<div class="t" style="left:3531.99px;top:2025.14px;font-size:29.6px;line-height:29.6px;font-weight:400;color:#111418;transform:scaleX(1.1625);transform-origin:0 0;">-</div>
<div class="t" style="left:3703.19px;top:2025.14px;font-size:29.6px;line-height:29.6px;font-weight:400;color:#111418;transform:scaleX(1.1625);transform-origin:0 0;">-</div>
<svg class="ic" style="left:3626px;top:2080.2px;width:166px;height:80.0px" viewBox="0 0 166 80.0" preserveAspectRatio="none"><polygon points="0,0 166,0 166,5 17.6,80.0 0,80.0" fill="#ffffff"/></svg>
<div class="t" style="left:628.80px;top:2105.14px;font-size:29.6px;line-height:29.6px;font-weight:400;color:#111418;letter-spacing:0.421px;">Work beyond the plan</div>
<div class="t" style="left:1123.99px;top:2105.14px;font-size:29.6px;line-height:29.6px;font-weight:400;color:#dc0f3c;transform:scaleX(1.1625);transform-origin:0 0;">-</div>
<div class="t" style="left:1282.19px;top:2105.14px;font-size:29.6px;line-height:29.6px;font-weight:400;color:#111418;transform:scaleX(1.1625);transform-origin:0 0;">-</div>
<div class="t" style="left:1440.69px;top:2105.14px;font-size:29.6px;line-height:29.6px;font-weight:400;color:#111418;transform:scaleX(1.1625);transform-origin:0 0;">-</div>
<div class="t" style="left:1598.99px;top:2105.14px;font-size:29.6px;line-height:29.6px;font-weight:400;color:#111418;transform:scaleX(1.1625);transform-origin:0 0;">-</div>
<div class="t" style="left:1762.19px;top:2105.14px;font-size:29.6px;line-height:29.6px;font-weight:400;color:#111418;transform:scaleX(1.1625);transform-origin:0 0;">-</div>
<div class="t" style="left:1923.94px;top:2105.14px;font-size:29.6px;line-height:29.6px;font-weight:400;color:#111418;transform:scaleX(1.1625);transform-origin:0 0;">-</div>
<div class="t" style="left:2080.79px;top:2105.14px;font-size:29.6px;line-height:29.6px;font-weight:400;color:#d9730b;transform:scaleX(1.1625);transform-origin:0 0;">-</div>
<div class="t" style="left:2235.29px;top:2105.14px;font-size:29.6px;line-height:29.6px;font-weight:400;color:#dc0f3c;transform:scaleX(1.1625);transform-origin:0 0;">-</div>
<div class="t" style="left:2395.09px;top:2105.14px;font-size:29.6px;line-height:29.6px;font-weight:400;color:#111418;transform:scaleX(1.1625);transform-origin:0 0;">-</div>
<div class="t" style="left:2562.19px;top:2105.14px;font-size:29.6px;line-height:29.6px;font-weight:400;color:#111418;transform:scaleX(1.1625);transform-origin:0 0;">-</div>
<div class="t" style="left:2730.19px;top:2105.14px;font-size:29.6px;line-height:29.6px;font-weight:400;color:#111418;transform:scaleX(1.1625);transform-origin:0 0;">-</div>
<div class="t" style="left:2896.89px;top:2105.14px;font-size:29.6px;line-height:29.6px;font-weight:400;color:#111418;transform:scaleX(1.1625);transform-origin:0 0;">-</div>
<div class="t" style="left:3061.99px;top:2105.14px;font-size:29.6px;line-height:29.6px;font-weight:400;color:#111418;transform:scaleX(1.1625);transform-origin:0 0;">-</div>
<div class="t" style="left:3220.79px;top:2105.14px;font-size:29.6px;line-height:29.6px;font-weight:400;color:#d9730b;transform:scaleX(1.1625);transform-origin:0 0;">-</div>
<div class="t" style="left:3375.19px;top:2105.14px;font-size:29.6px;line-height:29.6px;font-weight:400;color:#dc0f3c;transform:scaleX(1.1625);transform-origin:0 0;">-</div>
<div class="t" style="left:3531.99px;top:2105.14px;font-size:29.6px;line-height:29.6px;font-weight:400;color:#111418;transform:scaleX(1.1625);transform-origin:0 0;">-</div>
<div class="t" style="left:3703.19px;top:2105.14px;font-size:29.6px;line-height:29.6px;font-weight:400;color:#111418;transform:scaleX(1.1625);transform-origin:0 0;">-</div>
<div class="r" style="left:588px;top:928px;width:3204px;height:2px;background:#dadbde;border-radius:0px;"></div>
<div class="r" style="left:588px;top:930px;width:462px;height:3px;background:#ffffff;border-radius:0px;"></div>
<div class="r" style="left:588px;top:1008px;width:3204px;height:2px;background:#dadbde;border-radius:0px;"></div>
<div class="r" style="left:588px;top:1010px;width:462px;height:3px;background:#ffffff;border-radius:0px;"></div>
<div class="r" style="left:588px;top:1088px;width:3204px;height:2px;background:#dadbde;border-radius:0px;"></div>
<div class="r" style="left:588px;top:1090px;width:462px;height:3px;background:#ffffff;border-radius:0px;"></div>
<div class="r" style="left:588px;top:1168px;width:3204px;height:2px;background:#dadbde;border-radius:0px;"></div>
<div class="r" style="left:588px;top:1170px;width:462px;height:3px;background:#ffffff;border-radius:0px;"></div>
<div class="r" style="left:588px;top:1248px;width:3204px;height:2px;background:#dadbde;border-radius:0px;"></div>
<div class="r" style="left:588px;top:1250px;width:462px;height:3px;background:#ffffff;border-radius:0px;"></div>
<div class="r" style="left:588px;top:1334px;width:3204px;height:2px;background:#dadbde;border-radius:0px;"></div>
<div class="r" style="left:588px;top:1336px;width:462px;height:3px;background:#ffffff;border-radius:0px;"></div>
<div class="r" style="left:588px;top:1420px;width:3204px;height:2px;background:#dadbde;border-radius:0px;"></div>
<div class="r" style="left:588px;top:1422px;width:462px;height:3px;background:#ffffff;border-radius:0px;"></div>
<div class="r" style="left:588px;top:1507px;width:3204px;height:2px;background:#dadbde;border-radius:0px;"></div>
<div class="r" style="left:588px;top:1509px;width:462px;height:3px;background:#ffffff;border-radius:0px;"></div>
<div class="r" style="left:588px;top:1587px;width:3204px;height:2px;background:#dadbde;border-radius:0px;"></div>
<div class="r" style="left:588px;top:1589px;width:462px;height:3px;background:#ffffff;border-radius:0px;"></div>
<div class="r" style="left:588px;top:1667px;width:3204px;height:2px;background:#dadbde;border-radius:0px;"></div>
<div class="r" style="left:588px;top:1669px;width:462px;height:3px;background:#ffffff;border-radius:0px;"></div>
<div class="r" style="left:588px;top:1747px;width:3204px;height:2px;background:#dadbde;border-radius:0px;"></div>
<div class="r" style="left:588px;top:1749px;width:462px;height:3px;background:#ffffff;border-radius:0px;"></div>
<div class="r" style="left:588px;top:1827px;width:3204px;height:2px;background:#dadbde;border-radius:0px;"></div>
<div class="r" style="left:588px;top:1829px;width:462px;height:3px;background:#ffffff;border-radius:0px;"></div>
<div class="r" style="left:588px;top:1913px;width:3204px;height:2px;background:#dadbde;border-radius:0px;"></div>
<div class="r" style="left:588px;top:1915px;width:462px;height:3px;background:#ffffff;border-radius:0px;"></div>
<div class="r" style="left:588px;top:1999px;width:3204px;height:2px;background:#dadbde;border-radius:0px;"></div>
<div class="r" style="left:588px;top:2001px;width:462px;height:3px;background:#ffffff;border-radius:0px;"></div>
<div class="r" style="left:588px;top:2079px;width:3204px;height:2px;background:#dadbde;border-radius:0px;"></div>
<div class="r" style="left:588px;top:2081px;width:462px;height:3px;background:#ffffff;border-radius:0px;"></div>
<div class="r" style="left:588px;top:2159px;width:3204px;height:2px;background:#dadbde;border-radius:0px;"></div>
<div class="r" style="left:588px;top:2161px;width:462px;height:3px;background:#ffffff;border-radius:0px;"></div>
<div class="r" style="left:0px;top:2160px;width:3840px;height:1px;background:#3f5c5c;border-radius:0px;"></div>
</body></html>
